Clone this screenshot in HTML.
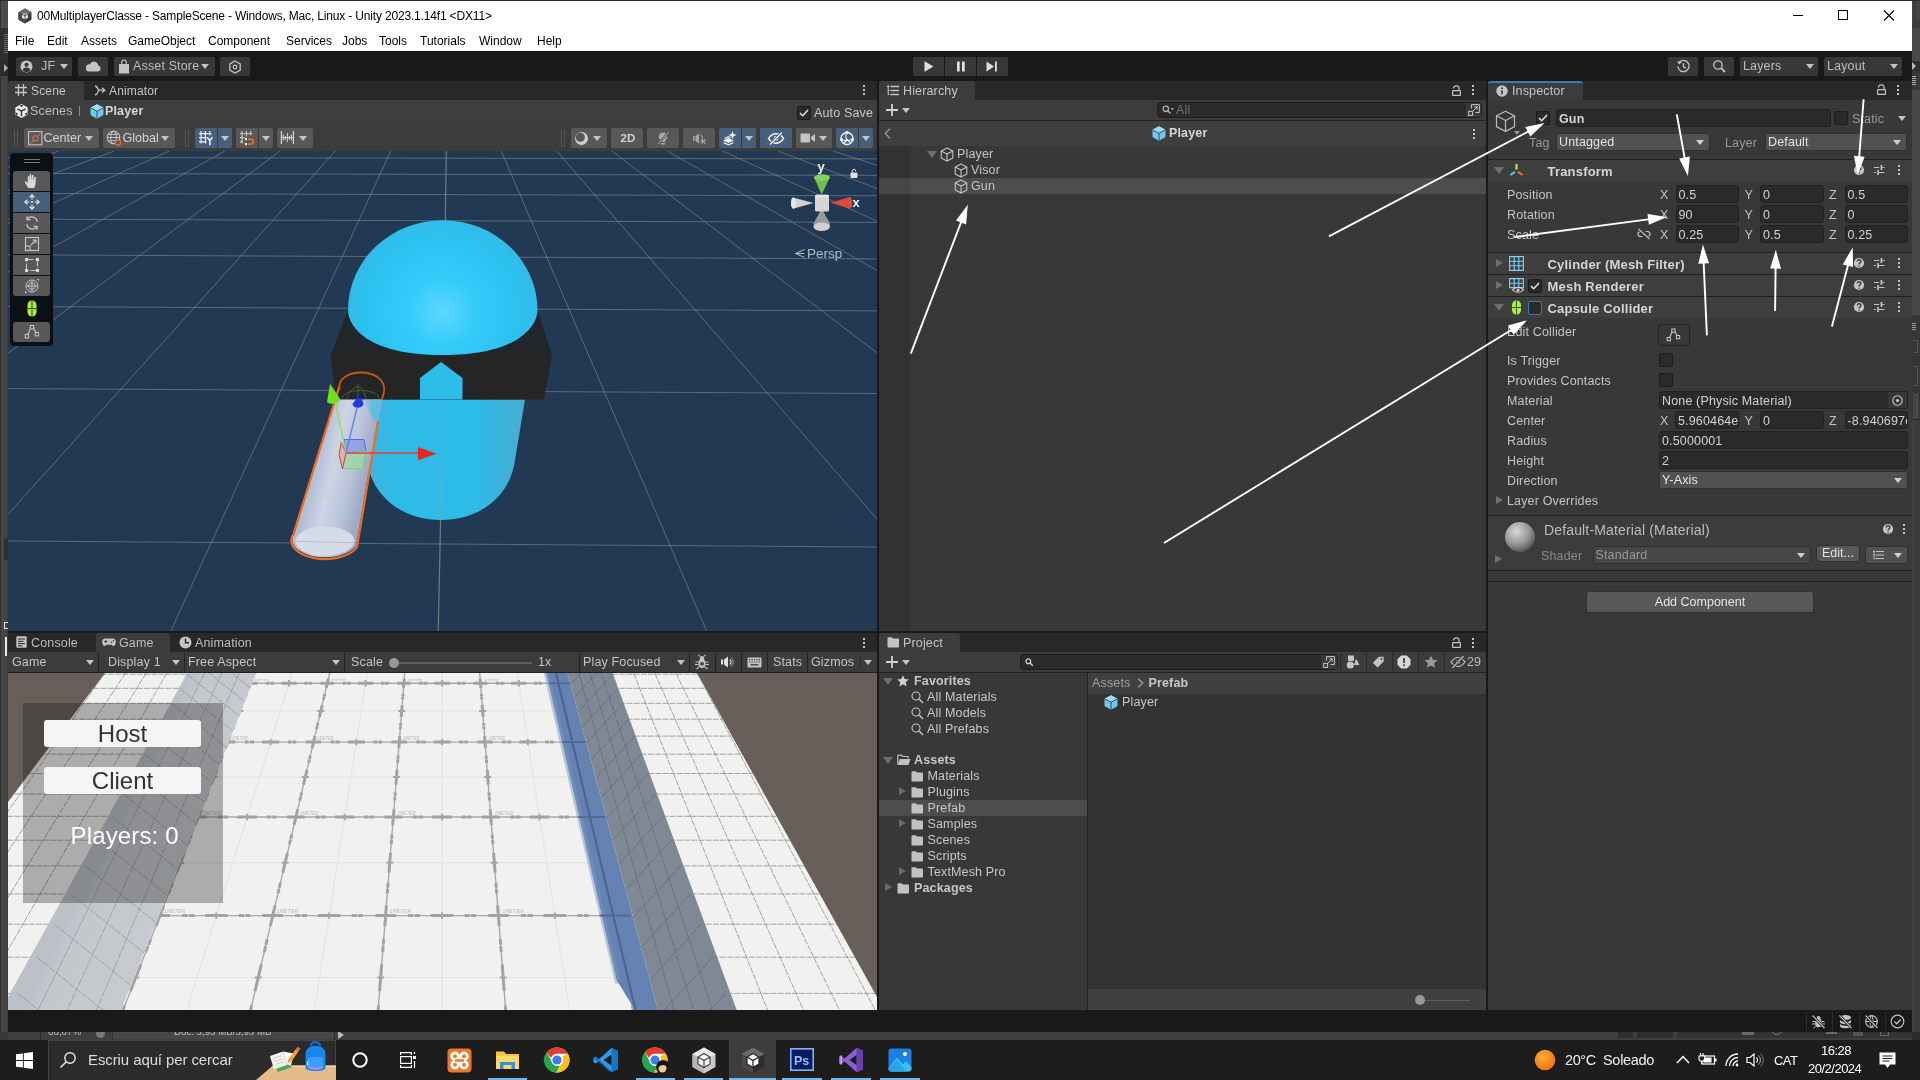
<!DOCTYPE html>
<html><head><meta charset="utf-8"><title>Unity</title>
<style>
*{box-sizing:border-box;margin:0;padding:0}
html,body{width:1920px;height:1080px;overflow:hidden;background:#4a4a4a;font-family:"Liberation Sans",sans-serif;font-size:12px;color:#c8c8c8}
.a{position:absolute}
.t{position:absolute;white-space:nowrap;line-height:1}
svg{position:absolute;overflow:visible}
.btn{position:absolute;background:#585858;border-radius:2px}
.fld{position:absolute;background:#2a2a2a;border:1px solid #212121;border-radius:3px;height:18px;line-height:16px;padding:1px 0 0 2px;color:#d2d2d2;white-space:nowrap;overflow:hidden}
.dd{position:absolute;background:#515151;border:1px solid #303030;border-radius:3px;height:18px;line-height:16px;padding:0 0 0 2px;color:#e4e4e4;white-space:nowrap}
.dd:after{content:"";position:absolute;right:5px;top:6px;border-left:4.5px solid transparent;border-right:4.5px solid transparent;border-top:5px solid #d2d2d2}
.tri-d{position:absolute;width:0;height:0;border-left:4.5px solid transparent;border-right:4.5px solid transparent;border-top:5px solid #c4c4c4}
.tri-r{position:absolute;width:0;height:0;border-top:4.5px solid transparent;border-bottom:4.5px solid transparent;border-left:7px solid #8a8a8a}
.fold-d{position:absolute;width:0;height:0;border-left:5px solid transparent;border-right:5px solid transparent;border-top:7px solid #707070}
.kebab{position:absolute;width:2px;height:2px;background:#c4c4c4;box-shadow:0 4px 0 #c4c4c4,0 8px 0 #c4c4c4}
.lbl{position:absolute;white-space:nowrap;line-height:1;color:#c4c4c4;margin-top:.5px}
.b{font-weight:bold}
.t,.lbl,.fld,.dd{letter-spacing:.15px}
#menu .t{letter-spacing:0}
.hl{position:absolute;height:1px;background:#1a1a1a}
.vl{position:absolute;width:1px;background:#1a1a1a}
.cb{position:absolute;width:14px;height:14px;background:#2a2a2a;border:1px solid #1c1c1c;border-radius:2px}
</style></head><body>
<div id="wrap" style="position:absolute;left:0;top:0;width:1920px;height:1080px;will-change:transform">
<!-- background window strips (left/right/bottom) -->
<div class="a" style="left:0;top:0;width:1920px;height:1px;background:#2b2b2b"></div>
<div class="a" style="left:0;top:1px;width:8px;height:1039px;background:#454545"></div>
<div class="a" style="left:0;top:1px;width:1px;height:1039px;background:#303030"></div>
<div class="a" style="left:7px;top:76px;width:1px;height:964px;background:#3a3a3a"></div>
<div class="a" style="left:1px;top:1px;width:7px;height:27px;background:#4b4b4b"></div>
<div class="a" style="left:1px;top:28px;width:7px;height:33px;background:#303030"></div>
<div class="a" style="left:4px;top:33px;width:4px;height:21px;background:repeating-linear-gradient(#303030 0 1px,#6a6a6a 1px 2px)"></div>
<div class="a" style="left:1px;top:61px;width:7px;height:15px;background:#2a2a2a"></div>
<div class="a" style="left:4px;top:64px;width:0;height:0;border-top:4px solid transparent;border-bottom:4px solid transparent;border-left:4px solid #b0b0b0"></div>
<div class="a" style="left:4px;top:538px;width:4px;height:22px;background:#2e2e2e;border-radius:2px 0 0 2px"></div>
<div class="a" style="left:4px;top:622px;width:4px;height:7px;border:1px solid #ddd;border-right:none"></div>
<div class="a" style="left:5px;top:637px;width:2px;height:19px;background:#e8e8e8"></div>
<div class="a" style="left:1912px;top:1px;width:8px;height:1039px;background:#3c3c3c"></div>
<div class="a" style="left:1912px;top:1px;width:1px;height:1039px;background:#424242"></div>
<div class="a" style="left:1916px;top:1px;width:4px;height:17px;background:#444"></div>
<div class="a" style="left:1912px;top:28px;width:8px;height:33px;background:#494949"></div>
<div class="a" style="left:1912px;top:61px;width:8px;height:10px;background:#303030"></div>
<div class="a" style="left:1912px;top:62px;width:0;height:0;border-top:4px solid transparent;border-bottom:4px solid transparent;border-left:4px solid #b8b8b8"></div>
<div class="a" style="left:1912px;top:71px;width:8px;height:19px;background:#383838"></div>
<div class="a" style="left:1912px;top:76px;width:4px;height:9px;background:repeating-linear-gradient(#aaa 0 1px,#383838 1px 2px)"></div>
<div class="a" style="left:1912px;top:90px;width:8px;height:225px;background:#474747"></div>
<div class="a" style="left:1912px;top:315px;width:8px;height:106px;background:#363636"></div>
<div class="a" style="left:1912px;top:323px;width:4px;height:7px;background:repeating-linear-gradient(#999 0 1px,#363636 1px 2px)"></div>
<div class="a" style="left:1913px;top:340px;width:5px;height:13px;border:1px solid #555;border-left:none"></div>
<div class="a" style="left:1913px;top:366px;width:5px;height:20px;border:1px solid #555;border-left:none"></div>
<div class="a" style="left:1913px;top:394px;width:5px;height:24px;border:1px solid #555;border-left:none;background:#444"></div>
<!-- Unity window -->
<div class="a" id="win" style="left:8px;top:1px;width:1904px;height:1031px;background:#191919"></div>
<!-- title bar -->
<div class="a" style="left:8px;top:1px;width:1904px;height:50px;background:#fff"></div>
<svg style="left:17px;top:8px" width="16" height="16" viewBox="0 0 16 16"><path d="M8 .5 14.5 4.2v7.6L8 15.5 1.500 11.800V4.200z" fill="#3a3a3a"/><path d="M8 .5 14.5 4.2 8 8 1.500 4.200z" fill="#6a6a6a"/><path d="M8 8v7.500L1.500 11.800V4.200z" fill="#4a4a4a"/><path d="M8 4.500l3 1.700v3.500l-3 1.800-3-1.800V6.200z" fill="#e6e6e6"/><path d="M8 4.500v7M5 6.200l3 1.800 3-1.800" stroke="#333" stroke-width=".8" fill="none"/></svg>
<div class="t" style="left:37px;top:10px;font-size:12px;color:#000;letter-spacing:-0.17px" id="title">00MultiplayerClasse - SampleScene - Windows, Mac, Linux - Unity 2023.1.14f1 &lt;DX11&gt;</div>
<svg style="left:1780px;top:1px" width="132" height="30" viewBox="0 0 132 30"><path d="M13 14.500h10" stroke="#000" stroke-width="1"/><rect x="58.500" y="9.500" width="9" height="9" fill="none" stroke="#000"/><path d="M104 9.500l10 10M114 9.500l-10 10" stroke="#000" stroke-width="1.100"/></svg>
<div id="menu" style="color:#000;font-size:12px">
<div class="t" style="left:15px;top:35px">File</div>
<div class="t" style="left:47px;top:35px">Edit</div>
<div class="t" style="left:81px;top:35px">Assets</div>
<div class="t" style="left:128px;top:35px">GameObject</div>
<div class="t" style="left:208px;top:35px">Component</div>
<div class="t" style="left:286px;top:35px">Services</div>
<div class="t" style="left:342px;top:35px">Jobs</div>
<div class="t" style="left:379px;top:35px">Tools</div>
<div class="t" style="left:420px;top:35px">Tutorials</div>
<div class="t" style="left:479px;top:35px">Window</div>
<div class="t" style="left:537px;top:35px">Help</div>
</div>
<!-- main toolbar y 51..81 bg #191919 -->
<div class="a" style="left:16px;top:57px;width:56px;height:19px;background:#383838;border-radius:2px"></div>
<div class="a" style="left:78px;top:57px;width:30px;height:19px;background:#383838;border-radius:2px"></div>
<div class="a" style="left:114px;top:57px;width:101px;height:19px;background:#383838;border-radius:2px"></div>
<div class="a" style="left:220px;top:57px;width:30px;height:19px;background:#383838;border-radius:2px"></div>
<svg style="left:20px;top:60px" width="13" height="13" viewBox="0 0 13 13"><circle cx="6.500" cy="6.500" r="6" fill="#c4c4c4"/><circle cx="6.500" cy="4.800" r="2.100" fill="#383838"/><path d="M2.600 10.200c.8-2 2.300-2.600 3.900-2.600s3.100.6 3.900 2.600c-1 1.300-2.400 1.900-3.900 1.900s-2.900-.6-3.900-1.900z" fill="#383838"/></svg>
<div class="t" style="left:41px;top:60px;font-size:12.500px;color:#bdbdbd">JF</div>
<div class="tri-d" style="left:60px;top:64px"></div>
<svg style="left:85px;top:60px" width="16" height="12" viewBox="0 0 16 12"><path d="M4 11.500h8.500a3 3 0 0 0 .6-5.950A4.200 4.200 0 0 0 5 4.300 3.600 3.600 0 0 0 4 11.500z" fill="#c4c4c4"/></svg>
<svg style="left:118px;top:59px" width="12" height="15" viewBox="0 0 12 15"><path d="M1 5h10v9.500H1z" fill="#c4c4c4"/><path d="M3.800 5V3.200a2.200 2.200 0 0 1 4.400 0V5" fill="none" stroke="#c4c4c4" stroke-width="1.200"/></svg>
<div class="t" style="left:133px;top:60px;font-size:12.500px;color:#bdbdbd">Asset Store</div>
<div class="tri-d" style="left:201px;top:64px"></div>
<svg style="left:228px;top:60px" width="14" height="14" viewBox="0 0 14 14"><path d="M7 1 12.200 4v6L7 13 1.800 10V4z" fill="none" stroke="#c4c4c4" stroke-width="1.300"/><circle cx="7" cy="7" r="1.800" fill="none" stroke="#c4c4c4" stroke-width="1.200"/></svg>
<!-- play controls -->
<div class="a" style="left:913px;top:57px;width:31px;height:19px;background:#383838;border-radius:2px 0 0 2px"></div>
<div class="a" style="left:945px;top:57px;width:31px;height:19px;background:#383838"></div>
<div class="a" style="left:977px;top:57px;width:31px;height:19px;background:#383838;border-radius:0 2px 2px 0"></div>
<svg style="left:913px;top:57px" width="95" height="19" viewBox="0 0 95 19"><path d="M11.500 4.300v10.400l9-5.200z" fill="#e0e0e0"/><path d="M44 4.500h2.700v10H44zM49 4.500h2.700v10H49z" fill="#e0e0e0"/><path d="M73.500 4.500v10l7.500-5zM82 4.500h1.800v10H82z" fill="#e0e0e0"/></svg>
<!-- right group -->
<div class="a" style="left:1668px;top:57px;width:30px;height:19px;background:#383838;border-radius:2px"></div>
<div class="a" style="left:1704px;top:57px;width:30px;height:19px;background:#383838;border-radius:2px"></div>
<div class="a" style="left:1740px;top:57px;width:78px;height:19px;background:#383838;border-radius:2px"></div>
<div class="a" style="left:1824px;top:57px;width:78px;height:19px;background:#383838;border-radius:2px"></div>
<svg style="left:1676px;top:59px" width="15" height="15" viewBox="0 0 15 15"><path d="M2.600 4.200A5.600 5.600 0 1 1 1.900 7.500" fill="none" stroke="#c4c4c4" stroke-width="1.400"/><path d="M.8 2.200 3.300 5.600 5.800 2.900z" fill="#c4c4c4"/><path d="M7.500 4.300v3.500l2.500 1.400" fill="none" stroke="#c4c4c4" stroke-width="1.300"/></svg>
<svg style="left:1712px;top:59px" width="15" height="15" viewBox="0 0 15 15"><circle cx="6" cy="6" r="4.200" fill="none" stroke="#c4c4c4" stroke-width="1.300"/><path d="M9.200 9.200 13 13" stroke="#c4c4c4" stroke-width="1.800"/></svg>
<div class="t" style="left:1743px;top:60px;font-size:12.500px;color:#bdbdbd">Layers</div>
<div class="tri-d" style="left:1806px;top:64px"></div>
<div class="t" style="left:1827px;top:60px;font-size:12.500px;color:#bdbdbd">Layout</div>
<div class="tri-d" style="left:1890px;top:64px"></div>
<!-- ============ SCENE PANEL (x 8..877, y 81..630) ============ -->
<div class="a" style="left:8px;top:81px;width:869px;height:19px;background:#282828"></div>
<div class="a" style="left:8px;top:81px;width:76px;height:19px;background:#3c3c3c;border-radius:3px 3px 0 0"></div>
<div class="a" style="left:8px;top:100px;width:869px;height:51px;background:#3c3c3c"></div>
<div class="a" style="left:8px;top:100px;width:869px;height:24px;background:#3e3e3e"></div>
<svg style="left:15px;top:84px" width="12" height="12" viewBox="0 0 12 12"><path d="M3.500 0v12M8.500 0v12M0 3.500h12M0 8.500h12" stroke="#c4c4c4" stroke-width="1.300"/></svg>
<div class="t" style="left:31px;top:85px;color:#c4c4c4">Scene</div>
<svg style="left:94px;top:85px" width="12" height="11" viewBox="0 0 12 11"><path d="M1 1c2 .5 3 2 3.500 4.200H10M1 10c2-.5 3-2 3.500-4.800" fill="none" stroke="#c4c4c4" stroke-width="1.300"/><path d="M8 2.800 10.800 5.200 8 7.600" fill="none" stroke="#c4c4c4" stroke-width="1.300"/></svg>
<div class="t" style="left:109px;top:85px;color:#c4c4c4">Animator</div>
<div class="kebab" style="left:863px;top:85px"></div>
<!-- breadcrumb -->
<svg style="left:15px;top:104px" width="13" height="14" viewBox="0 0 13 14"><path d="M6.500 0 12.700 3.500v7L6.500 14 .3 10.500v-7z" fill="#ececec"/><path d="M6.500 7.200V12.300M6.500 7.200 2.300 4.800M6.500 7.200l4.200-2.400" stroke="#3e3e3e" stroke-width="1.500" fill="none"/><path d="M4.700.900 6.500 3.600 8.300.900zM0 8.200l3 1-1.100 2.500zM13 8.200l-3 1 1.100 2.500z" fill="#3e3e3e"/></svg>
<div class="t" style="left:30px;top:105px;font-size:12.500px;color:#bdbdbd">Scenes</div>
<div class="a" style="left:79px;top:106px;width:1px;height:10px;background:#8a8a8a"></div>
<svg style="left:90px;top:104px" width="14" height="15" viewBox="0 0 14 15"><path d="M7 .3 13.500 3.800v7.300L7 14.700.5 11.100V3.800z" fill="#6fc8f0"/><path d="M7 .3 13.500 3.800 7 7.300.5 3.800z" fill="#9adcf7"/><path d="M7 7.300v7.400M.5 3.800 7 7.300l6.500-3.500" stroke="#3e3e3e" stroke-width=".9" fill="none"/></svg>
<div class="t b" style="left:105px;top:105px;font-size:12.500px;color:#d6d6d6">Player</div>
<div class="cb" style="left:797px;top:106px"></div>
<svg style="left:799px;top:109px" width="10" height="8" viewBox="0 0 10 8"><path d="M1 4l2.700 2.700L9 1" fill="none" stroke="#e4e4e4" stroke-width="1.500"/></svg>
<div class="t" style="left:814px;top:107px;font-size:12.500px;color:#c8c8c8">Auto Save</div>
<!-- overlay toolbar left -->
<div class="a" style="left:14px;top:130px;width:1px;height:17px;background:#555"></div><div class="a" style="left:17px;top:130px;width:1px;height:17px;background:#555"></div>
<div class="btn" style="left:24px;top:128px;width:75px;height:20px"></div>
<svg style="left:28px;top:131px" width="15" height="15" viewBox="0 0 15 15"><rect x=".6" y=".6" width="13.300" height="13.300" fill="none" stroke="#d0d0d0" stroke-width="1"/><path d="M2.500 12.500 12.500 2.500" stroke="#aaa" stroke-width=".8"/><circle cx="7.500" cy="7.300" r="2.600" fill="#585858" stroke="#f06a35" stroke-width="1.100"/></svg>
<div class="t" style="left:43.500px;top:131.500px;font-size:12.600px;letter-spacing:0;color:#d2d2d2">Center</div>
<div class="tri-d" style="left:85px;top:136px"></div>
<div class="btn" style="left:103px;top:128px;width:72px;height:20px"></div>
<svg style="left:106px;top:130px" width="17" height="17" viewBox="0 0 17 17"><circle cx="7.500" cy="7.500" r="6.300" fill="none" stroke="#d0d0d0" stroke-width="1"/><ellipse cx="7.500" cy="7.500" rx="2.800" ry="6.300" fill="none" stroke="#d0d0d0" stroke-width=".9"/><path d="M1.200 7.500h12.600M2.200 4.300h10.600M2.200 10.700h10.600" stroke="#d0d0d0" stroke-width=".9"/><circle cx="12" cy="12.500" r="2.600" fill="#585858" stroke="#f06a35" stroke-width="1.300"/></svg>
<div class="t" style="left:122.500px;top:131.500px;font-size:12.600px;letter-spacing:0;color:#d2d2d2">Global</div>
<div class="tri-d" style="left:161px;top:136px"></div>
<div class="a" style="left:185px;top:130px;width:1px;height:17px;background:#555"></div><div class="a" style="left:188px;top:130px;width:1px;height:17px;background:#555"></div>
<div class="btn" style="left:195px;top:128px;width:22px;height:20px;background:#46607c;border-radius:2px 0 0 2px"></div>
<div class="btn" style="left:218px;top:128px;width:14px;height:20px;background:#46607c;border-radius:0 2px 2px 0"></div>
<svg style="left:199px;top:131px" width="15" height="15" viewBox="0 0 15 15"><path d="M2.100 0V12.500M6.400 0V12.500M10.700 0V4.600M0 2.700H12.600M0 6.600H7.500M0 10.900H7.500" stroke="#f0f0f0" stroke-width="1.200" fill="none"/><path d="M8.200 6.200 10.800 9.800 13.400 6.200M10.800 9.800V14.200" stroke="#f4f4f4" stroke-width="1.500" fill="none"/></svg>
<div class="tri-d" style="left:220.500px;top:136px"></div>
<div class="btn" style="left:236px;top:128px;width:22px;height:20px;border-radius:2px 0 0 2px"></div>
<div class="btn" style="left:259px;top:128px;width:14px;height:20px;border-radius:0 2px 2px 0"></div>
<svg style="left:240px;top:131px" width="15" height="15" viewBox="0 0 15 15"><path d="M2.100 0V12.500M6.400 0V5.500M10.700 0V4.600M0 2.700H12.300M0 6.600H4.800M0 10.900H3.700" stroke="#d4d4d4" stroke-width="1.100" stroke-dasharray="3 .5" fill="none"/><rect x="5" y="7" width="2" height="2.200" fill="#f4f4f4"/><rect x="5" y="12" width="2" height="2.200" fill="#f4f4f4"/><path d="M8 8.200h2.800a2.500 2.500 0 0 1 0 5H8" stroke="#f4652f" stroke-width="1.700" fill="none"/></svg>
<div class="tri-d" style="left:261.500px;top:136px"></div>
<div class="btn" style="left:277px;top:128px;width:36px;height:20px"></div>
<svg style="left:280px;top:131px" width="15" height="15" viewBox="0 0 15 15"><path d="M1.400 0V13M13.400 0V13" stroke="#d4d4d4" stroke-width="1.200"/><path d="M3.300 3.500V9.500M5.300 5V9M7.400 2V11M9.400 5V9M11.400 3.500V9.500M1.400 6.600H13.400" stroke="#d4d4d4" stroke-width="1"/></svg>
<div class="tri-d" style="left:298.500px;top:136px"></div>
<!-- overlay toolbar right -->
<div class="a" style="left:561px;top:130px;width:1px;height:17px;background:#555"></div><div class="a" style="left:564px;top:130px;width:1px;height:17px;background:#555"></div>
<div class="btn" style="left:571px;top:128px;width:36px;height:20px"></div>
<svg style="left:574px;top:131px" width="15" height="15" viewBox="0 0 15 15"><circle cx="7.500" cy="7.500" r="6.500" fill="#d0d0d0"/><circle cx="6.300" cy="6.300" r="4.600" fill="#585858"/></svg>
<div class="tri-d" style="left:592.500px;top:136px"></div>
<div class="btn" style="left:611px;top:128px;width:32px;height:20px"></div>
<div class="t b" style="left:620.500px;top:132.500px;font-size:11.500px;color:#cfcfcf">2D</div>
<div class="btn" style="left:647px;top:128px;width:32px;height:20px"></div>
<svg style="left:656px;top:131px" width="14" height="15" viewBox="0 0 14 15"><path d="M7 1.500a4.200 4.200 0 0 1 2.400 7.700v1.800H4.600V9.200A4.200 4.200 0 0 1 7 1.500zM5 12h4v1.500H5z" fill="#a8a8a8"/><path d="M2 13 12.500 1.500" stroke="#585858" stroke-width="2.200"/><path d="M2 13 12.500 1.500" stroke="#a8a8a8" stroke-width="1"/></svg>
<div class="btn" style="left:683px;top:128px;width:32px;height:20px"></div>
<svg style="left:692px;top:132px" width="16" height="13" viewBox="0 0 16 13"><path d="M1 4h1.500v5H1zM3.500 4 7 1.500v10L3.500 9z" fill="#a8a8a8"/><path d="M8.500 3a4 4 0 0 1 0 7" stroke="#a8a8a8" fill="none" stroke-width="1.100"/><path d="M9.500 7.500l4 4M13.500 7.500l-4 4" stroke="#a8a8a8" stroke-width="1.100"/></svg>
<div class="btn" style="left:719px;top:128px;width:22px;height:20px;background:#46607c;border-radius:2px 0 0 2px"></div>
<div class="btn" style="left:742px;top:128px;width:14px;height:20px;background:#46607c;border-radius:0 2px 2px 0"></div>
<svg style="left:722px;top:131px" width="16" height="15" viewBox="0 0 16 15"><path d="M1 9.500 6.500 7l5.500 2.500L6.500 12zM1 12l5.500 2.500L12 12l-1.500-.7-4 1.900-4-1.900z" fill="#f0f0f0"/><path d="M10.500 0l1.100 3 3 1.100-3 1.100-1.100 3-1.100-3-3-1.100 3-1.100z" fill="#f0f0f0"/><path d="M2.500 7.500 6.500 5.700l2 .9" stroke="#f0f0f0" stroke-width="1.200" fill="none"/></svg>
<div class="tri-d" style="left:744.500px;top:136px"></div>
<div class="btn" style="left:760px;top:128px;width:32px;height:20px;background:#46607c"></div>
<svg style="left:767px;top:131px" width="18" height="15" viewBox="0 0 18 15"><path d="M1.500 7.500C4 3.800 6.500 2.800 9 2.800s5 1 7.500 4.700C14 11.200 11.500 12.200 9 12.200s-5-1-7.500-4.700z" fill="none" stroke="#f0f0f0" stroke-width="1.500"/><circle cx="9" cy="7.500" r="2.400" fill="#f0f0f0"/><path d="M3 13.500 15 1.500" stroke="#46607c" stroke-width="3"/><path d="M3 13.500 15 1.500" stroke="#f0f0f0" stroke-width="1.300"/></svg>
<div class="btn" style="left:796px;top:128px;width:36px;height:20px"></div>
<svg style="left:800px;top:132px" width="16" height="12" viewBox="0 0 16 12"><rect x=".5" y="1.500" width="9.500" height="9" rx="1" fill="#c4c4c4"/><path d="M11 5 15 2v8l-4-3z" fill="#c4c4c4"/></svg>
<div class="tri-d" style="left:818.500px;top:136px"></div>
<div class="btn" style="left:836px;top:128px;width:22px;height:20px;background:#46607c;border-radius:2px 0 0 2px"></div>
<div class="btn" style="left:859px;top:128px;width:14px;height:20px;background:#46607c;border-radius:0 2px 2px 0"></div>
<svg style="left:839px;top:130px" width="16" height="16" viewBox="0 0 16 16"><circle cx="8" cy="8.500" r="6" fill="none" stroke="#f0f0f0" stroke-width="1.400"/><path d="M8 2.500c-1.500 2-1.500 5 0 7.500M2.200 9.500c2.500 1.200 6 1.500 11.500 0M8 10l-3.500 3.500M8 10l4 3" stroke="#f0f0f0" stroke-width="1.100" fill="none"/><circle cx="8" cy="2.500" r="1.700" fill="#f0f0f0"/><circle cx="2.500" cy="9.500" r="1.500" fill="#f0f0f0"/><circle cx="13.500" cy="9.500" r="1.500" fill="#f0f0f0"/><circle cx="8" cy="10" r="1.300" fill="#f0f0f0"/></svg>
<div class="tri-d" style="left:861.500px;top:136px"></div>
<!-- scene viewport -->
<div class="a" style="left:8px;top:151px;width:869px;height:480px;background:#223954;overflow:hidden">
<svg style="left:0;top:0" width="869" height="480" viewBox="8 151 869 480">
<path d="M8 157.5L877 158.9M8 173.4L877 175.3M8 193.4L877 195.8M8 219.1L877 222.4M8 254.8L877 258.9M8 306.5L877 310.9M8 388.6L877 393.5M8 541L877 547M-51.7 151L-1972.7 631M3.6 151L-1704.8 631M58.9 151L-1436.8 631M114.2 151L-1168.9 631M169.5 151L-900.9 631M224.8 151L-633.0 631M280.1 151L-365.1 631M335.4 151L-97.1 631M390.7 151L170.8 631M501.3 151L706.7 631M556.6 151L974.6 631M611.9 151L1242.6 631M667.2 151L1510.5 631M722.5 151L1778.5 631M777.8 151L2046.4 631M833.1 151L2314.3 631M888.4 151L2582.3 631M943.7 151L2850.2 631" stroke="#84878c" stroke-opacity=".62" stroke-width="1" fill="none"/>
<path d="M-438.8 151L-3848.3 631M-383.5 151L-3580.3 631M-328.2 151L-3312.4 631M-272.9 151L-3044.5 631M-217.6 151L-2776.5 631M-162.3 151L-2508.6 631M-107.0 151L-2240.6 631M999.0 151L3118.2 631M1054.3 151L3386.1 631M1109.6 151L3654.0 631M1164.9 151L3922.0 631M1220.2 151L4189.9 631M1275.5 151L4457.9 631M1330.8 151L4725.8 631" stroke="#84878c" stroke-opacity=".45" stroke-width="1" fill="none"/>
<path d="M446.300 151L445.300 221M440.600 520L438.200 631" stroke="#84878b" stroke-opacity=".85" stroke-width="1.200" fill="none"/>
<defs>
<radialGradient id="gh" cx="442" cy="312" r="100" gradientUnits="userSpaceOnUse"><stop offset="0" stop-color="#5bd8ff"/><stop offset=".35" stop-color="#34cbfa"/><stop offset=".8" stop-color="#2cc0ef"/><stop offset="1" stop-color="#36b9e6"/></radialGradient>
<linearGradient id="gb" x1="357" y1="0" x2="525" y2="0" gradientUnits="userSpaceOnUse"><stop offset="0" stop-color="#3fb4dc"/><stop offset=".25" stop-color="#2fbbe8"/><stop offset=".7" stop-color="#2dbbe8"/><stop offset="1" stop-color="#48acd2"/></linearGradient>
<linearGradient id="gg" x1="316" y1="459" x2="368" y2="471" gradientUnits="userSpaceOnUse"><stop offset="0" stop-color="#b2bcd4"/><stop offset=".35" stop-color="#ced5e8"/><stop offset=".7" stop-color="#bac3da"/><stop offset="1" stop-color="#9da9c5"/></linearGradient><linearGradient id="gw" x1="364" y1="0" x2="381" y2="0" gradientUnits="userSpaceOnUse"><stop offset="0" stop-color="#4dbde6" stop-opacity=".25"/><stop offset=".6" stop-color="#4dbde6" stop-opacity=".8"/><stop offset="1" stop-color="#5cc0e4" stop-opacity=".9"/></linearGradient>
</defs>
<path d="M357 399.500H525L515 460C510 498 478 520 441 520S372 498 367 460z" fill="url(#gb)"/>
<path d="M348 310H537.500L552 355.500H330.500z" fill="#22262b"/>
<path d="M330.500 355.500H552L543.800 399.500H336z" fill="#252525"/>
<path d="M420 399.500V378L441 362L462.500 378V399.500z" fill="#2dbde9"/>
<path d="M348 310A94.500 89.500 0 0 1 537.500 310C537.500 325 520 355 442.500 355S348 325 348 310z" fill="url(#gh)"/>
<path d="M334.700 399.500L294.500 534A30.500 16 0 0 0 356 546L377.500 420L381.500 399.500z" fill="url(#gg)"/>
<ellipse cx="325" cy="541" rx="29.500" ry="14.500" fill="#d6dbe8"/>
<path d="M363.500 399.500H382L377.800 422L372.500 418z" fill="url(#gw)"/>
<path d="M296 541.300L355 542.800" stroke="#9aa0aa" stroke-opacity=".5" stroke-width="1" fill="none"/>
<path d="M339.500 386L293.500 534A31 17 0 0 0 357 547L378 421" fill="none" stroke="#f26a1b" stroke-width="2.200" stroke-linejoin="round"/>
<path d="M378 421L382 399.500" fill="none" stroke="#9aa6c0" stroke-opacity=".7" stroke-width="1.200"/>
<path d="M382 399.500L384 392C386 378 372 372.500 361 372.500S337 378 339.500 390" fill="none" stroke="#c4571c" stroke-width="1.800"/>
<path d="M342 398C345 388 376 388 379 398M346 399C352 386 362 380 366 399M358 399V384" fill="none" stroke="#4f6b47" stroke-width=".8"/>
<path d="M344 439.500H364L366 451L346 453z" fill="#8a96e6" fill-opacity=".75" stroke="#4f6cf0" stroke-width="1"/>
<path d="M346 453L366 451L362.500 468.800H342.500z" fill="#9fd6a4" fill-opacity=".8" stroke="#69e04a" stroke-width="1"/>
<path d="M341.300 442.500L346 453L342.500 468.800L339 455z" fill="#e5a7ad" fill-opacity=".8" stroke="#d2433a" stroke-width="1"/>
<path d="M346 453H420" stroke="#d8423a" stroke-width="1.600"/>
<path d="M418 447L436.500 453.800L418 460.200z" fill="#e02a20"/>
<path d="M346 453L334.500 398" stroke="#8be552" stroke-width="1.300"/>
<path d="M330 384L327 402C329 405 338 404 340.500 399.500z" fill="#6ee01e"/>
<path d="M346 453L357 408" stroke="#5a7cf5" stroke-width="1.300"/>
<path d="M360.500 393L352.500 404C353 409 362 409 363.500 404z" fill="#1d3fd8"/><path d="M360.500 393L358 398H363z" fill="#0b1a7a"/>
<path d="M441.200 453L440.600 520" stroke="#9aa0a6" stroke-opacity=".55" stroke-width="1" fill="none"/>
<path d="M309 499C318 495 350 497 357 507M326 498L348 409" stroke="#a8e08a" stroke-opacity=".45" stroke-width=".7" fill="none"/>
</svg>
<svg style="left:0;top:0" width="869" height="480" viewBox="8 151 869 480">
<path d="M793 197.500C790.500 199 790.500 207.500 793 208.800L813.500 203z" fill="#d2d2d2"/><ellipse cx="793.500" cy="203.100" rx="2.500" ry="5.600" fill="#e6e6e6"/>
<path d="M850 197C853 199 853 207.500 850 208.800L830.500 202.800z" fill="#e0493d"/>
<path d="M813.500 223.500C813.500 232 830 232 830 223.500L822.500 210h-1.500z" fill="#9b9b9b"/><ellipse cx="821.700" cy="226.800" rx="8.300" ry="4.200" fill="#d0d0d0"/>
<path d="M814 177.500L821.700 194.500L829.800 177.500z" fill="#6fc04a"/><ellipse cx="821.900" cy="177.600" rx="7.900" ry="3.300" fill="#85d35c"/>
<rect x="815" y="194.800" width="14" height="16.600" rx="1.500" fill="#d6d6d6"/><rect x="815" y="194.800" width="14" height="3" rx="1.500" fill="#e4e4e4"/>
<text x="817.500" y="171" font-family="Liberation Sans" font-weight="bold" font-size="13" fill="#f0f0f0">y</text>
<text x="852.500" y="206.500" font-family="Liberation Sans" font-weight="bold" font-size="13" fill="#f0f0f0">x</text>
<path d="M851 173h6v4.500h-6zM852.200 173v-1.800a1.800 1.800 0 0 1 3.600 0" fill="none" stroke="#e0e0e0" stroke-width="1"/><rect x="851" y="173" width="6" height="4.500" fill="#e0e0e0"/>
<path d="M804.500 249.500L795.500 253.500L804.500 257.500M795.500 253.500H804" fill="none" stroke="#b4bcc6" stroke-width="1"/>
<text x="807" y="258.200" font-family="Liberation Sans" font-size="13.500" fill="#b4bcc6">Persp</text>
</svg>
<div class="a" style="left:2px;top:2px;width:43px;height:193px;background:#0b1016;border-radius:4px"></div>
<div class="a" style="left:16px;top:8px;width:16px;height:1px;background:#777"></div><div class="a" style="left:16px;top:11px;width:16px;height:1px;background:#777"></div>
<div class="a" style="left:5px;top:20px;width:37px;height:20px;background:#585858;border-radius:3px 3px 0 0"></div>
<div class="a" style="left:5px;top:41px;width:37px;height:20px;background:#46607c;border-radius:0"></div>
<div class="a" style="left:5px;top:62px;width:37px;height:20px;background:#585858;border-radius:0"></div>
<div class="a" style="left:5px;top:83px;width:37px;height:20px;background:#585858;border-radius:0"></div>
<div class="a" style="left:5px;top:104px;width:37px;height:20px;background:#585858;border-radius:0"></div>
<div class="a" style="left:5px;top:125px;width:37px;height:20px;background:#585858;border-radius:0 0 3px 3px"></div>
<div class="a" style="left:5px;top:171px;width:37px;height:20px;background:#585858;border-radius:3px"></div>
<svg style="left:15.500px;top:22px" width="16" height="16" viewBox="0 0 16 16"><path d="M4.500 15c-1.200-1.500-2.500-3.500-3.500-5.500-.5-1 .8-1.700 1.500-.8l1.300 1.600V3.500c0-1 1.500-1 1.600 0l.3 4V1.800c0-1 1.600-1 1.600 0l.2 5.700.5-5c.1-1 1.600-.9 1.600.1l-.2 5.400 1-3.800c.3-.9 1.600-.6 1.500.4L11.500 11c-.2 1.500-.8 3-1.500 4z" fill="#d8d8d8"/></svg>
<svg style="left:15.500px;top:43px" width="16" height="16" viewBox="0 0 16 16"><path d="M8 1.500v13M1.500 8h13" stroke="#e8e8e8" stroke-width="1.100" stroke-dasharray="4 1.500 2 1.500 4"/><path d="M5.800 3.500 8 .8l2.200 2.700M5.800 12.500 8 15.200l2.200-2.700M3.500 5.800.8 8l2.700 2.200M12.500 5.800 15.200 8l-2.700 2.200" fill="none" stroke="#e8e8e8" stroke-width="1.200"/></svg>
<svg style="left:15.500px;top:64px" width="16" height="16" viewBox="0 0 16 16"><path d="M13.300 6.800A5.600 5.600 0 0 0 3.300 4.200M2.700 9.200A5.600 5.600 0 0 0 12.700 11.800" fill="none" stroke="#c8c8c8" stroke-width="1.200"/><path d="M3 1.200V4.600H6.400M13 14.800V11.400H9.600" fill="none" stroke="#c8c8c8" stroke-width="1.200"/></svg>
<svg style="left:15.500px;top:85px" width="16" height="16" viewBox="0 0 16 16"><rect x="1.500" y="1.500" width="13" height="13" fill="none" stroke="#c8c8c8" stroke-width="1.100"/><rect x="1.500" y="10" width="4.500" height="4.500" fill="none" stroke="#c8c8c8" stroke-width="1.100"/><path d="M7 9 12 4M8.500 4H12v3.500" fill="none" stroke="#c8c8c8" stroke-width="1.100"/></svg>
<svg style="left:15.500px;top:106px" width="16" height="16" viewBox="0 0 16 16"><path d="M2.500 2.500h11v11h-11z" fill="none" stroke="#c8c8c8" stroke-width="1.100" stroke-dasharray="7 2 2 0"/><rect x="1" y="1" width="3" height="3" fill="#d8d8d8"/><rect x="12" y="1" width="3" height="3" fill="#d8d8d8"/><rect x="1" y="12" width="3" height="3" fill="#d8d8d8"/><rect x="12" y="12" width="3" height="3" fill="#d8d8d8"/></svg>
<svg style="left:15.500px;top:127px" width="16" height="16" viewBox="0 0 16 16"><circle cx="8" cy="8" r="6" fill="none" stroke="#c8c8c8" stroke-width="1"/><circle cx="8" cy="8" r="3.500" fill="none" stroke="#c8c8c8" stroke-width=".9"/><path d="M8 2.500v11M2.500 8h11" stroke="#c8c8c8" stroke-width="1"/><path d="M1 13v2h2zM13 1h2v2z" fill="#d8d8d8"/></svg>
<svg style="left:19px;top:149px" width="10" height="17" viewBox="0 0 10 17"><rect x=".5" y=".5" width="9" height="16" rx="4.500" fill="#a6ee3c"/><path d="M5 .5v16M.5 8.500h9" stroke="#2c4a10" stroke-width="1"/></svg>
<svg style="left:15.500px;top:173px" width="16" height="16" viewBox="0 0 16 16"><path d="M3 12 7 3.500h2L13 10" fill="none" stroke="#c8c8c8" stroke-width="1.100"/><rect x="6.300" y="1.500" width="3.400" height="3.400" fill="#585858" stroke="#c8c8c8" stroke-width="1"/><rect x="1.200" y="10.500" width="3.400" height="3.400" fill="#585858" stroke="#c8c8c8" stroke-width="1"/><rect x="11.200" y="8.500" width="3.400" height="3.400" fill="#585858" stroke="#c8c8c8" stroke-width="1"/></svg>
</div>
<!-- ============ GAME PANEL ============ -->
<div class="a" style="left:8px;top:633px;width:869px;height:19px;background:#282828"></div>
<div class="a" style="left:96px;top:633px;width:74px;height:19px;background:#3c3c3c;border-radius:3px 3px 0 0"></div>
<div class="a" style="left:8px;top:652px;width:869px;height:20px;background:#3c3c3c"></div>
<div class="a" style="left:8px;top:672px;width:869px;height:1px;background:#1f1f1f"></div>
<svg style="left:16px;top:636px" width="11" height="12" viewBox="0 0 11 12"><rect x=".3" y=".3" width="10.400" height="11.400" rx="1" fill="#c4c4c4"/><path d="M2 3h7M2 5.300h5.500M2 7.600h7M2 9.800h4.500" stroke="#282828" stroke-width="1"/></svg>
<div class="t" style="left:31px;top:637px;font-size:12.500px;color:#bdbdbd">Console</div>
<svg style="left:102px;top:638px" width="14" height="9" viewBox="0 0 14 9"><path d="M3.500 .5h7A3.300 3.300 0 0 1 13.800 4C13.800 6 12.800 8 11.500 8c-1 0-1.500-1.300-2.500-1.300H5C4 6.700 3.500 8 2.500 8 1.200 8 .2 6 .2 4A3.300 3.300 0 0 1 3.500.5z" fill="#c4c4c4"/><path d="M3.800 2v3M2.300 3.500h3" stroke="#3c3c3c" stroke-width="1"/><circle cx="9.500" cy="4.300" r=".8" fill="#3c3c3c"/><circle cx="11.300" cy="2.700" r=".8" fill="#3c3c3c"/></svg>
<div class="t" style="left:119px;top:637px;font-size:12.500px;color:#bdbdbd">Game</div>
<svg style="left:179px;top:636px" width="13" height="13" viewBox="0 0 13 13"><circle cx="6.500" cy="6.500" r="6" fill="#c4c4c4"/><path d="M6.500 2.500v4.300h3.500" fill="none" stroke="#282828" stroke-width="1.400"/></svg>
<div class="t" style="left:195px;top:637px;font-size:12.500px;color:#bdbdbd">Animation</div>
<div class="kebab" style="left:863px;top:638px"></div>
<div class="t" style="left:12px;top:656px;font-size:12.500px;color:#c4c4c4">Game</div>
<div class="tri-d" style="left:85.5px;top:660px"></div>
<div class="a" style="left:98px;top:653px;width:1px;height:19px;background:#242424"></div>
<div class="t" style="left:108px;top:656px;font-size:12.500px;color:#c4c4c4">Display 1</div>
<div class="tri-d" style="left:172px;top:660px"></div>
<div class="a" style="left:184px;top:653px;width:1px;height:19px;background:#242424"></div>
<div class="t" style="left:188px;top:656px;font-size:12.500px;color:#c4c4c4">Free Aspect</div>
<div class="tri-d" style="left:332px;top:660px"></div>
<div class="a" style="left:344px;top:653px;width:1px;height:19px;background:#242424"></div>
<div class="t" style="left:351px;top:656px;font-size:12.500px;color:#c4c4c4">Scale</div>
<div class="a" style="left:394px;top:662px;width:138px;height:1.500px;background:#5e5e5e"></div>
<div class="a" style="left:389px;top:657.500px;width:10px;height:10px;border-radius:5px;background:#999"></div>
<div class="t" style="left:538px;top:656px;font-size:12.500px;color:#c4c4c4">1x</div>
<div class="a" style="left:579px;top:653px;width:1px;height:19px;background:#242424"></div>
<div class="t" style="left:583px;top:656px;font-size:12.500px;color:#c4c4c4">Play Focused</div>
<div class="tri-d" style="left:677px;top:660px"></div>
<div class="a" style="left:689px;top:653px;width:1px;height:19px;background:#242424"></div>
<svg style="left:694px;top:654px" width="16" height="16" viewBox="0 0 16 16"><ellipse cx="8" cy="9.500" rx="3.600" ry="4.500" fill="#c4c4c4"/><circle cx="8" cy="4.200" r="2.200" fill="#c4c4c4"/><path d="M4.500 8H1.500M4.500 10.500H1M5 13l-2.500 2M11.500 8h3M11.500 10.500H15M11 13l2.500 2M6 2.500 4.500.8M10 2.500 11.500.8" stroke="#c4c4c4" stroke-width="1.100"/><rect x="6.300" y="8.300" width="3.400" height="3" fill="#3c3c3c"/></svg>
<div class="a" style="left:715px;top:653px;width:1px;height:19px;background:#242424"></div>
<svg style="left:720px;top:655px" width="15" height="14" viewBox="0 0 15 14"><path d="M1 4.500h2v5H1zM4 4.500 8 1.500v11L4 9.500z" fill="#e0e0e0"/><path d="M9.800 4.500a3.300 3.300 0 0 1 0 5" fill="none" stroke="#e0e0e0" stroke-width="1.200"/><path d="M11.300 2.500a6 6 0 0 1 0 9" fill="none" stroke="#9a9a9a" stroke-width="1"/></svg>
<div class="a" style="left:741px;top:653px;width:1px;height:19px;background:#242424"></div>
<svg style="left:747px;top:657px" width="15" height="11" viewBox="0 0 15 11"><rect x=".5" y=".5" width="14" height="10" rx="1" fill="#c4c4c4"/><path d="M2 2.700h11M2 5h11" stroke="#3c3c3c" stroke-width="1.200" stroke-dasharray="1.300 1.120"/><path d="M3.500 7.800h8" stroke="#3c3c3c" stroke-width="1.300"/></svg>
<div class="a" style="left:767px;top:653px;width:1px;height:19px;background:#242424"></div>
<div class="t" style="left:773px;top:656px;font-size:12.500px;color:#c4c4c4">Stats</div>
<div class="a" style="left:807px;top:653px;width:1px;height:19px;background:#242424"></div>
<div class="t" style="left:811px;top:656px;font-size:12.500px;color:#c4c4c4">Gizmos</div>
<div class="a" style="left:860px;top:656px;width:1px;height:13px;background:#2c2c2c"></div>
<div class="tri-d" style="left:863.5px;top:660px"></div>
<div class="a" style="left:8px;top:673px;width:869px;height:337px;background:#f1f1f0;overflow:hidden">
<svg style="left:0;top:0" width="869" height="337" viewBox="8 673 869 337">
<defs><clipPath id="cpL"><path d="M105 673L8 802V997L187.500 673z"/></clipPath><clipPath id="cpR"><path d="M612.500 673H697L877 997V1010H736.700z"/></clipPath><clipPath id="cpWL"><path d="M187.500 673H256.250L121 1010H8V997z"/></clipPath><clipPath id="cpWR"><path d="M567.500 673H612.500L736.700 1010H658z"/></clipPath><clipPath id="cpF"><path d="M256.250 673H546.250L635 1010H121z"/></clipPath>
<linearGradient id="gwl" x1="150" y1="760" x2="230" y2="800" gradientUnits="userSpaceOnUse"><stop offset="0" stop-color="#bcc1c8"/><stop offset=".12" stop-color="#c4c8cd"/><stop offset="1" stop-color="#c7cbcf"/></linearGradient></defs>
<g clip-path="url(#cpF)"><path d="M100 658.2H700M100 710.9H700M100 777.1H700M100 862.7H700M100 977.5H700M-7.8 673L-323.4 1010M67.2 673L-195.8 1010M142.2 673L-68.3 1010M217.2 673L59.3 1010M292.2 673L186.8 1010M367.2 673L314.4 1010M442.2 673L441.9 1010M517.2 673L569.5 1010M592.2 673L697.0 1010M667.2 673L824.6 1010M742.2 673L952.1 1010M817.2 673L1079.7 1010" stroke="#e4e4e3" stroke-width="1.200" fill="none"/>
<path d="M100 683.2H700M100 742.1H700M100 817.0H700M100 915.6H700M179.7 673L-4.5 1010M254.7 673L123.1 1010M329.7 673L250.6 1010M404.7 673L378.1 1010M479.7 673L505.7 1010M554.7 673L633.2 1010M629.7 673L760.8 1010" stroke="#a9a9a8" stroke-width="1.400" fill="none"/>
<path d="M97.6 683.2H104.5M112.9 683.2H116.3M117.3 683.2H120.9M128.2 683.2H143.5M151.2 683.2H154.6M155.6 683.2H158.8M167.3 683.2H174.1M174.1 683.2H181.0M189.5 683.2H192.9M193.9 683.2H197.5M204.8 683.2H220.1M227.8 683.2H231.2M232.2 683.2H235.4M243.8 683.2H250.7M250.7 683.2H257.6M266.0 683.2H269.5M270.5 683.2H274.1M281.4 683.2H296.7M304.3 683.2H307.8M308.8 683.2H312.0M320.4 683.2H327.3M327.3 683.2H334.2M342.6 683.2H346.1M347.1 683.2H350.7M357.9 683.2H373.3M380.9 683.2H384.4M385.4 683.2H388.6M397.0 683.2H403.9M403.9 683.2H410.8M419.2 683.2H422.7M423.7 683.2H427.3M434.5 683.2H449.8M457.5 683.2H461.0M462.0 683.2H465.2M473.6 683.2H480.5M480.5 683.2H487.4M495.8 683.2H499.2M500.2 683.2H503.8M511.1 683.2H526.4M534.1 683.2H537.5M538.5 683.2H541.8M550.2 683.2H557.1M557.1 683.2H564.0M572.4 683.2H575.8M576.8 683.2H580.4M587.7 683.2H603.0M610.7 683.2H614.1M615.1 683.2H618.3M626.8 683.2H633.7M633.7 683.2H640.5M649.0 683.2H652.4M653.4 683.2H657.0M664.3 683.2H679.6M687.3 683.2H690.7M691.7 683.2H694.9M703.3 683.2H710.2M56.2 742.1H63.9M73.3 742.1H77.2M78.3 742.1H82.3M90.5 742.1H107.6M116.2 742.1H120.1M121.2 742.1H124.8M134.2 742.1H142.0M142.0 742.1H149.7M159.1 742.1H163.0M164.1 742.1H168.1M176.3 742.1H193.4M202.0 742.1H205.9M207.0 742.1H210.6M220.0 742.1H227.7M227.7 742.1H235.4M244.9 742.1H248.7M249.9 742.1H253.9M262.0 742.1H279.2M287.8 742.1H291.6M292.7 742.1H296.3M305.8 742.1H313.5M313.5 742.1H321.2M330.6 742.1H334.5M335.6 742.1H339.7M347.8 742.1H365.0M373.5 742.1H377.4M378.5 742.1H382.1M391.5 742.1H399.3M399.3 742.1H407.0M416.4 742.1H420.3M421.4 742.1H425.4M433.6 742.1H450.7M459.3 742.1H463.2M464.3 742.1H467.9M477.3 742.1H485.0M485.0 742.1H492.7M502.2 742.1H506.0M507.2 742.1H511.2M519.3 742.1H536.5M545.1 742.1H548.9M550.0 742.1H553.6M563.1 742.1H570.8M570.8 742.1H578.5M587.9 742.1H591.8M592.9 742.1H597.0M605.1 742.1H622.3M630.8 742.1H634.7M635.8 742.1H639.4M648.8 742.1H656.6M656.6 742.1H664.3M673.7 742.1H677.6M678.7 742.1H682.7M690.9 742.1H708.0M716.6 742.1H720.5M721.6 742.1H725.2M734.6 742.1H742.3M3.5 817.0H12.3M23.0 817.0H27.4M28.7 817.0H33.3M42.5 817.0H62.0M71.8 817.0H76.1M77.4 817.0H81.5M92.2 817.0H101.0M101.0 817.0H109.8M120.5 817.0H124.9M126.1 817.0H130.7M140.0 817.0H159.5M169.2 817.0H173.6M174.9 817.0H179.0M189.7 817.0H198.4M198.4 817.0H207.2M217.9 817.0H222.3M223.6 817.0H228.2M237.4 817.0H256.9M266.7 817.0H271.0M272.3 817.0H276.4M287.1 817.0H295.9M295.9 817.0H304.7M315.4 817.0H319.8M321.0 817.0H325.6M334.9 817.0H354.4M364.1 817.0H368.5M369.8 817.0H373.9M384.6 817.0H393.4M393.4 817.0H402.1M412.8 817.0H417.2M418.5 817.0H423.1M432.3 817.0H451.8M461.6 817.0H466.0M467.2 817.0H471.3M482.0 817.0H490.8M490.8 817.0H499.6M510.3 817.0H514.7M515.9 817.0H520.5M529.8 817.0H549.3M559.0 817.0H563.4M564.7 817.0H568.8M579.5 817.0H588.3M588.3 817.0H597.0M607.8 817.0H612.1M613.4 817.0H618.0M627.2 817.0H646.7M656.5 817.0H660.9M662.1 817.0H666.2M676.9 817.0H685.7M685.7 817.0H694.5M705.2 817.0H709.6M710.9 817.0H715.4M724.7 817.0H744.2M753.9 817.0H758.3M759.6 817.0H763.7M774.4 817.0H783.2M-65.7 915.6H-55.6M-43.2 915.6H-38.1M-36.6 915.6H-31.3M-20.6 915.6H2.0M13.3 915.6H18.3M19.8 915.6H24.5M37.0 915.6H47.1M47.1 915.6H57.3M69.7 915.6H74.8M76.2 915.6H81.5M92.2 915.6H114.8M126.1 915.6H131.2M132.6 915.6H137.4M149.8 915.6H159.9M159.9 915.6H170.1M182.5 915.6H187.6M189.0 915.6H194.3M205.1 915.6H227.6M238.9 915.6H244.0M245.5 915.6H250.2M262.6 915.6H272.8M272.8 915.6H282.9M295.3 915.6H300.4M301.9 915.6H307.2M317.9 915.6H340.5M351.7 915.6H356.8M358.3 915.6H363.0M375.4 915.6H385.6M385.6 915.6H395.7M408.2 915.6H413.2M414.7 915.6H420.0M430.7 915.6H453.3M464.6 915.6H469.6M471.1 915.6H475.8M488.3 915.6H498.4M498.4 915.6H508.6M521.0 915.6H526.1M527.5 915.6H532.8M543.5 915.6H566.1M577.4 915.6H582.5M583.9 915.6H588.7M601.1 915.6H611.2M611.2 915.6H621.4M633.8 915.6H638.9M640.3 915.6H645.6M656.4 915.6H678.9M690.2 915.6H695.3M696.8 915.6H701.5M713.9 915.6H724.1M724.1 915.6H734.2M746.6 915.6H751.7M753.2 915.6H758.5M769.2 915.6H791.8M803.0 915.6H808.1M809.6 915.6H814.3M826.7 915.6H836.9M176.7 678.5L174.1 683.2M174.1 683.2L171.5 687.9M168.3 693.9L166.9 696.4M166.5 697.1L165.1 699.7M162.1 705.1L155.7 716.9M152.4 723.0L150.9 725.7M150.4 726.5L149.0 729.2M145.2 736.2L142.0 742.1M142.0 742.1L138.7 748.1M134.6 755.6L132.9 758.7M132.4 759.6L130.5 762.9M126.8 769.8L118.6 784.7M114.4 792.5L112.5 796.0M111.9 797.0L110.1 800.4M105.1 809.4L101.0 817.0M101.0 817.0L96.8 824.8M91.4 834.5L89.2 838.6M88.5 839.8L86.2 844.1M81.3 853.0L70.6 872.6M65.0 882.9L62.4 887.6M61.7 889.0L59.2 893.5M52.6 905.5L47.1 915.6M47.1 915.6L41.4 926.0M34.2 939.2L31.2 944.7M30.3 946.3L27.1 952.2M20.5 964.3L5.8 991.2M-2.0 1005.4L-5.6 1011.9M252.6 678.5L250.7 683.2M250.7 683.2L248.9 687.9M246.5 693.9L245.6 696.4M245.3 697.1L244.3 699.7M242.1 705.1L237.6 716.9M235.2 723.0L234.1 725.7M233.8 726.5L232.8 729.2M230.0 736.2L227.7 742.1M227.7 742.1L225.4 748.1M222.4 755.6L221.2 758.7M220.9 759.6L219.6 762.9M216.9 769.8L211.1 784.7M208.0 792.5L206.6 796.0M206.2 797.0L204.9 800.4M201.4 809.4L198.4 817.0M198.4 817.0L195.4 824.8M191.6 834.5L190.0 838.6M189.6 839.8L187.9 844.1M184.4 853.0L176.7 872.6M172.7 882.9L170.9 887.6M170.3 889.0L168.6 893.5M163.9 905.5L159.9 915.6M159.9 915.6L155.9 926.0M150.7 939.2L148.6 944.7M147.9 946.3L145.6 952.2M140.9 964.3L130.4 991.2M124.8 1005.4L122.3 1011.9M328.4 678.5L327.3 683.2M327.3 683.2L326.2 687.9M324.8 693.9L324.2 696.4M324.0 697.1L323.4 699.7M322.2 705.1L319.4 716.9M318.0 723.0L317.3 725.7M317.1 726.5L316.5 729.2M314.9 736.2L313.5 742.1M313.5 742.1L312.1 748.1M310.3 755.6L309.6 758.7M309.4 759.6L308.6 762.9M307.0 769.8L303.5 784.7M301.7 792.5L300.8 796.0M300.6 797.0L299.8 800.4M297.7 809.4L295.9 817.0M295.9 817.0L294.1 824.8M291.8 834.5L290.8 838.6M290.6 839.8L289.5 844.1M287.4 853.0L282.8 872.6M280.4 882.9L279.3 887.6M279.0 889.0L278.0 893.5M275.1 905.5L272.8 915.6M272.8 915.6L270.3 926.0M267.2 939.2L265.9 944.7M265.6 946.3L264.2 952.2M261.3 964.3L255.0 991.2M251.7 1005.4L250.1 1011.9M404.3 678.5L403.9 683.2M403.9 683.2L403.5 687.9M403.1 693.9L402.9 696.4M402.8 697.1L402.6 699.7M402.2 705.1L401.2 716.9M400.8 723.0L400.5 725.7M400.5 726.5L400.3 729.2M399.7 736.2L399.3 742.1M399.3 742.1L398.8 748.1M398.2 755.6L397.9 758.7M397.9 759.6L397.6 762.9M397.1 769.8L395.9 784.7M395.3 792.5L395.0 796.0M394.9 797.0L394.7 800.4M394.0 809.4L393.4 817.0M393.4 817.0L392.7 824.8M392.0 834.5L391.7 838.6M391.6 839.8L391.2 844.1M390.5 853.0L389.0 872.6M388.2 882.9L387.8 887.6M387.7 889.0L387.3 893.5M386.4 905.5L385.6 915.6M385.6 915.6L384.8 926.0M383.7 939.2L383.3 944.7M383.2 946.3L382.7 952.2M381.7 964.3L379.6 991.2M378.5 1005.4L378.0 1011.9M480.1 678.5L480.5 683.2M480.5 683.2L480.9 687.9M481.3 693.9L481.5 696.4M481.6 697.1L481.8 699.7M482.2 705.1L483.1 716.9M483.6 723.0L483.8 725.7M483.8 726.5L484.0 729.2M484.6 736.2L485.0 742.1M485.0 742.1L485.5 748.1M486.1 755.6L486.3 758.7M486.4 759.6L486.6 762.9M487.2 769.8L488.3 784.7M488.9 792.5L489.2 796.0M489.3 797.0L489.5 800.4M490.2 809.4L490.8 817.0M490.8 817.0L491.4 824.8M492.2 834.5L492.5 838.6M492.6 839.8L492.9 844.1M493.6 853.0L495.1 872.6M495.9 882.9L496.3 887.6M496.4 889.0L496.7 893.5M497.6 905.5L498.4 915.6M498.4 915.6L499.2 926.0M500.2 939.2L500.7 944.7M500.8 946.3L501.2 952.2M502.2 964.3L504.2 991.2M505.3 1005.4L505.8 1011.9M556.0 678.5L557.1 683.2M557.1 683.2L558.2 687.9M559.6 693.9L560.2 696.4M560.3 697.1L560.9 699.7M562.2 705.1L564.9 716.9M566.3 723.0L567.0 725.7M567.2 726.5L567.8 729.2M569.4 736.2L570.8 742.1M570.8 742.1L572.2 748.1M573.9 755.6L574.7 758.7M574.9 759.6L575.7 762.9M577.3 769.8L580.7 784.7M582.5 792.5L583.4 796.0M583.6 797.0L584.4 800.4M586.5 809.4L588.3 817.0M588.3 817.0L590.1 824.8M592.3 834.5L593.3 838.6M593.6 839.8L594.6 844.1M596.7 853.0L601.2 872.6M603.6 882.9L604.7 887.6M605.0 889.0L606.1 893.5M608.9 905.5L611.2 915.6M611.2 915.6L613.7 926.0M616.7 939.2L618.0 944.7M618.4 946.3L619.8 952.2M622.6 964.3L628.9 991.2M632.2 1005.4L633.7 1011.9M631.8 678.5L633.7 683.2M633.7 683.2L635.5 687.9M637.8 693.9L638.8 696.4M639.1 697.1L640.1 699.7M642.2 705.1L646.8 716.9M649.1 723.0L650.2 725.7M650.5 726.5L651.5 729.2M654.3 736.2L656.6 742.1M656.6 742.1L658.9 748.1M661.8 755.6L663.0 758.7M663.4 759.6L664.7 762.9M667.3 769.8L673.1 784.7M676.2 792.5L677.6 796.0M678.0 797.0L679.3 800.4M682.8 809.4L685.7 817.0M685.7 817.0L688.7 824.8M692.5 834.5L694.1 838.6M694.6 839.8L696.3 844.1M699.7 853.0L707.4 872.6M711.3 882.9L713.2 887.6M713.7 889.0L715.5 893.5M720.1 905.5L724.1 915.6M724.1 915.6L728.1 926.0M733.2 939.2L735.4 944.7M736.0 946.3L738.3 952.2M743.0 964.3L753.5 991.2M759.0 1005.4L761.5 1011.9" stroke="#a2a2a1" stroke-width="3" fill="none"/>
<path d="M135.9 680.0v6.400M212.4 680.0v6.400M289.0 680.0v6.400M365.6 680.0v6.400M442.2 680.0v6.400M518.8 680.0v6.400M595.4 680.0v6.400M671.9 680.0v6.400M99.1 738.9v6.400M184.8 738.9v6.400M270.6 738.9v6.400M356.4 738.9v6.400M442.1 738.9v6.400M527.9 738.9v6.400M613.7 738.9v6.400M699.4 738.9v6.400M52.3 813.8v6.400M149.7 813.8v6.400M247.2 813.8v6.400M344.6 813.8v6.400M442.1 813.8v6.400M539.5 813.8v6.400M637.0 813.8v6.400M734.4 813.8v6.400M-9.3 912.4v6.400M103.5 912.4v6.400M216.3 912.4v6.400M329.2 912.4v6.400M442.0 912.4v6.400M554.8 912.4v6.400M667.6 912.4v6.400M780.5 912.4v6.400M155.5 710.9h7M119.3 777.1h7M72.5 862.7h7M9.7 977.5h7M236.4 710.9h7M210.5 777.1h7M177.1 862.7h7M132.2 977.5h7M317.3 710.9h7M301.8 777.1h7M281.7 862.7h7M254.7 977.5h7M398.2 710.9h7M393.0 777.1h7M386.3 862.7h7M377.2 977.5h7M479.1 710.9h7M484.2 777.1h7M490.8 862.7h7M499.7 977.5h7M560.0 710.9h7M575.5 777.1h7M595.4 862.7h7M622.2 977.5h7M641.0 710.9h7M666.7 777.1h7M700.0 862.7h7M744.7 977.5h7" stroke="#a6a6a5" stroke-width="2" fill="none"/>
<text x="101.1" y="681.0" font-family="Liberation Mono" font-size="4.1" fill="#bcbcbb" font-style="italic">1METER</text>
<text x="177.6" y="681.0" font-family="Liberation Mono" font-size="4.1" fill="#bcbcbb" font-style="italic">1METER</text>
<text x="254.2" y="681.0" font-family="Liberation Mono" font-size="4.1" fill="#bcbcbb" font-style="italic">1METER</text>
<text x="330.8" y="681.0" font-family="Liberation Mono" font-size="4.1" fill="#bcbcbb" font-style="italic">1METER</text>
<text x="407.4" y="681.0" font-family="Liberation Mono" font-size="4.1" fill="#bcbcbb" font-style="italic">1METER</text>
<text x="484.0" y="681.0" font-family="Liberation Mono" font-size="4.1" fill="#bcbcbb" font-style="italic">1METER</text>
<text x="560.6" y="681.0" font-family="Liberation Mono" font-size="4.1" fill="#bcbcbb" font-style="italic">1METER</text>
<text x="637.2" y="681.0" font-family="Liberation Mono" font-size="4.1" fill="#bcbcbb" font-style="italic">1METER</text>
<text x="59.7" y="739.9" font-family="Liberation Mono" font-size="4.6" fill="#bcbcbb" font-style="italic">1METER</text>
<text x="145.5" y="739.9" font-family="Liberation Mono" font-size="4.6" fill="#bcbcbb" font-style="italic">1METER</text>
<text x="231.2" y="739.9" font-family="Liberation Mono" font-size="4.6" fill="#bcbcbb" font-style="italic">1METER</text>
<text x="317.0" y="739.9" font-family="Liberation Mono" font-size="4.6" fill="#bcbcbb" font-style="italic">1METER</text>
<text x="402.8" y="739.9" font-family="Liberation Mono" font-size="4.6" fill="#bcbcbb" font-style="italic">1METER</text>
<text x="488.5" y="739.9" font-family="Liberation Mono" font-size="4.6" fill="#bcbcbb" font-style="italic">1METER</text>
<text x="574.3" y="739.9" font-family="Liberation Mono" font-size="4.6" fill="#bcbcbb" font-style="italic">1METER</text>
<text x="660.1" y="739.9" font-family="Liberation Mono" font-size="4.6" fill="#bcbcbb" font-style="italic">1METER</text>
<text x="7.0" y="814.8" font-family="Liberation Mono" font-size="5.3" fill="#bcbcbb" font-style="italic">1METER</text>
<text x="104.5" y="814.8" font-family="Liberation Mono" font-size="5.3" fill="#bcbcbb" font-style="italic">1METER</text>
<text x="201.9" y="814.8" font-family="Liberation Mono" font-size="5.3" fill="#bcbcbb" font-style="italic">1METER</text>
<text x="299.4" y="814.8" font-family="Liberation Mono" font-size="5.3" fill="#bcbcbb" font-style="italic">1METER</text>
<text x="396.9" y="814.8" font-family="Liberation Mono" font-size="5.3" fill="#bcbcbb" font-style="italic">1METER</text>
<text x="494.3" y="814.8" font-family="Liberation Mono" font-size="5.3" fill="#bcbcbb" font-style="italic">1METER</text>
<text x="591.8" y="814.8" font-family="Liberation Mono" font-size="5.3" fill="#bcbcbb" font-style="italic">1METER</text>
<text x="689.2" y="814.8" font-family="Liberation Mono" font-size="5.3" fill="#bcbcbb" font-style="italic">1METER</text>
<text x="-62.2" y="913.4" font-family="Liberation Mono" font-size="6.1" fill="#bcbcbb" font-style="italic">1METER</text>
<text x="50.6" y="913.4" font-family="Liberation Mono" font-size="6.1" fill="#bcbcbb" font-style="italic">1METER</text>
<text x="163.4" y="913.4" font-family="Liberation Mono" font-size="6.1" fill="#bcbcbb" font-style="italic">1METER</text>
<text x="276.3" y="913.4" font-family="Liberation Mono" font-size="6.1" fill="#bcbcbb" font-style="italic">1METER</text>
<text x="389.1" y="913.4" font-family="Liberation Mono" font-size="6.1" fill="#bcbcbb" font-style="italic">1METER</text>
<text x="501.9" y="913.4" font-family="Liberation Mono" font-size="6.1" fill="#bcbcbb" font-style="italic">1METER</text>
<text x="614.7" y="913.4" font-family="Liberation Mono" font-size="6.1" fill="#bcbcbb" font-style="italic">1METER</text>
<text x="727.6" y="913.4" font-family="Liberation Mono" font-size="6.1" fill="#bcbcbb" font-style="italic">1METER</text>
</g>
<path d="M8 673H105L8 802z" fill="#685f5a"/><path d="M697 673H877V997z" fill="#685f5a"/>
<g clip-path="url(#cpL)"><path d="M105.0 673L-131.5 1010M125.6 673L-96.5 1010M146.2 673L-61.4 1010M166.9 673L-26.3 1010M187.5 673L8.8 1010M0 648.2H890M0 660.9H890M0 674.2H890M0 688.3H890M0 703.3H890M0 719.2H890M0 736.1H890M0 754.2H890M0 773.5H890M0 794.1H890M0 816.3H890M0 840.2H890M0 865.9H890M0 893.9H890M0 924.2H890M0 957.2H890M0 993.4H890" stroke="#6e6e6e" stroke-opacity="0.6" stroke-width="1" stroke-dasharray="6 1.200" fill="none"/></g>
<g clip-path="url(#cpR)"><path d="M612.5 673L731.5 1010M633.6 673L767.5 1010M654.8 673L803.4 1010M675.9 673L839.3 1010M697.0 673L875.2 1010M0 648.2H890M0 660.9H890M0 674.2H890M0 688.3H890M0 703.3H890M0 719.2H890M0 736.1H890M0 754.2H890M0 773.5H890M0 794.1H890M0 816.3H890M0 840.2H890M0 865.9H890M0 893.9H890M0 924.2H890M0 957.2H890M0 993.4H890" stroke="#6e6e6e" stroke-opacity="0.6" stroke-width="1" stroke-dasharray="6 1.200" fill="none"/></g>
<path d="M187.500 673H256.250L121 1010H8V997z" fill="url(#gwl)"/>
<g clip-path="url(#cpWL)"><path d="M204.7 673L38.0 1010M221.9 673L67.2 1010M239.1 673L96.5 1010M200.6 648.2l81.5 65.2M193.9 660.9l83.8 67.0M186.9 674.2l86.2 68.9M179.4 688.3l88.7 70.9M171.4 703.3l91.4 73.1M163.0 719.2l94.2 75.4M154.0 736.1l97.2 77.8M144.4 754.2l100.4 80.4M134.2 773.5l103.9 83.1M123.3 794.1l107.6 86.1M111.5 816.3l111.5 89.2M98.8 840.2l115.8 92.6M85.2 865.9l120.4 96.3M70.4 893.9l125.4 100.3M54.3 924.2l130.8 104.7M36.8 957.2l136.7 109.4M17.6 993.4l143.2 114.5M272.2 513.2l57.4 45.9M265.1 526.7l59.8 47.8M257.9 540.2l62.2 49.8M250.7 553.7l64.6 51.7M243.6 567.2l67.0 53.6M236.4 580.7l69.5 55.6M229.3 594.2l71.9 57.5M222.1 607.7l74.3 59.4M214.9 621.2l76.7 61.4M207.8 634.7l79.1 63.3" stroke="#7e8286" stroke-opacity=".55" stroke-width="1" stroke-dasharray="7 1.200" fill="none"/></g>
<path d="M546.250 673H567.500L658 1010H635L616.600 980z" fill="#6583b2"/>
<path d="M543.750 673h2.500L616.600 980l2 3.500h-3.500z" fill="#6583b2" fill-opacity=".4"/>
<path d="M546.250 673h3L620 980l-3.400 0z" fill="#7d96bf" fill-opacity=".5"/>
<path d="M567.500 673H612.500L736.700 1010H658z" fill="#7f8996"/>
<g clip-path="url(#cpWR)"><path d="M578.8 673L674.1 1010M590.0 673L693.3 1010M601.2 673L712.4 1010M603.8 648.2l-51.2 55.5M608.2 660.9l-52.6 57.0M612.9 674.2l-54.1 58.6M617.9 688.3l-55.7 60.4M623.2 703.3l-57.4 62.2M628.8 719.2l-59.2 64.1M634.8 736.1l-61.1 66.2M641.2 754.2l-63.1 68.4M648.0 773.5l-65.3 70.7M655.3 794.1l-67.6 73.2M663.1 816.3l-70.1 75.9M671.5 840.2l-72.8 78.8M680.7 865.9l-75.7 82.0M690.5 893.9l-78.8 85.4M701.2 924.2l-82.2 89.0M712.9 957.2l-85.9 93.1M725.7 993.4l-90.0 97.5M565.6 540.2l-39.1 42.4M570.4 553.7l-40.6 44.0M575.1 567.2l-42.1 45.6M579.9 580.7l-43.6 47.3M584.7 594.2l-45.2 48.9M589.5 607.7l-46.7 50.6M594.2 621.2l-48.2 52.2M599.0 634.7l-49.7 53.8" stroke="#58606a" stroke-opacity=".6" stroke-width="1" stroke-dasharray="7 1.200" fill="none"/></g>
<path d="M556 673L635.5 1010" stroke="#4a6390" stroke-width="2" fill="none"/>
<path d="M549.4 683.2H570.1M562.1 742.1H585.4M578.3 817.0H604.9M599.5 915.6H630.5" stroke="#53698f" stroke-width="2" fill="none"/>
</svg>
<div class="a" style="left:15px;top:30px;width:200px;height:200px;background:rgba(20,20,20,.31)"></div>
<div class="a" style="left:36px;top:46.500px;width:157px;height:27px;background:#f5f5f5;border-radius:3px;text-align:center;font-size:24px;line-height:27px;color:#323232">Host</div>
<div class="a" style="left:36px;top:93.500px;width:157px;height:27px;background:#f5f5f5;border-radius:3px;text-align:center;font-size:24px;line-height:27px;color:#323232">Client</div>
<div class="t" style="left:62.500px;top:151px;font-size:24px;color:#fff">Players: 0</div>
</div>
<!-- ============ HIERARCHY PANEL (x 879..1486, y 81..631) ============ -->
<div class="a" style="left:879px;top:81px;width:607px;height:19px;background:#282828"></div>
<div class="a" style="left:879px;top:81px;width:96px;height:19px;background:#3c3c3c;border-radius:3px 3px 0 0"></div>
<div class="a" style="left:879px;top:100px;width:607px;height:20px;background:#3c3c3c"></div>
<div class="a" style="left:879px;top:120px;width:607px;height:1px;background:#232323"></div>
<div class="a" style="left:879px;top:121px;width:607px;height:25px;background:#3e3e3e"></div>
<div class="a" style="left:879px;top:146px;width:607px;height:485px;background:#383838"></div>
<div class="a" style="left:879px;top:146px;width:32px;height:485px;background:#323232"></div>
<div class="a" style="left:879px;top:178px;width:607px;height:16px;background:#4d4d4d"></div>
<div class="a" style="left:879px;top:178px;width:32px;height:16px;background:#474747"></div>
<svg style="left:887px;top:85px" width="12" height="11" viewBox="0 0 12 11"><path d="M3.500 1.500H12M3.500 5.500H12M3.500 9.500H12" stroke="#c4c4c4" stroke-width="1.300"/><path d="M1.200 0v10M0 1.500h2.500M1.200 5.500h1.300M1.200 9.500h1.300" stroke="#c4c4c4" stroke-width="1"/></svg>
<div class="t" style="left:903px;top:85px;font-size:12.500px;color:#c4c4c4">Hierarchy</div>
<svg style="left:1452px;top:85px" width="9" height="11" viewBox="0 0 9 11"><rect x=".6" y="5.600" width="7.800" height="4.800" rx=".5" fill="none" stroke="#c4c4c4" stroke-width="1.200"/><path d="M1.500 3.500C1.500 0 7 0 7 3v2.500" fill="none" stroke="#c4c4c4" stroke-width="1.200"/></svg>
<div class="kebab" style="left:1472px;top:85px"></div>
<svg style="left:886px;top:104px" width="12" height="12" viewBox="0 0 12 12"><path d="M6 0v12M0 6h12" stroke="#d0d0d0" stroke-width="1.800"/></svg>
<div class="tri-d" style="left:902px;top:108px"></div>
<div class="a" style="left:1157px;top:102px;width:325px;height:16px;background:#2a2a2a;border:1px solid #1e1e1e;border-radius:4px"></div>
<div class="a" style="left:1466px;top:103px;width:15px;height:14px;background:#3a3a3a;border-radius:0 3px 3px 0"></div>
<svg style="left:1162px;top:105px" width="13" height="10" viewBox="0 0 13 10"><circle cx="3.800" cy="3.800" r="2.700" fill="none" stroke="#b0b0b0" stroke-width="1.300"/><path d="M5.800 5.800 8.500 8.500" stroke="#b0b0b0" stroke-width="1.400"/><path d="M8.500 3h3.500l-1.750 2z" fill="#b0b0b0"/></svg>
<div class="t" style="left:1176px;top:104px;font-size:12.500px;color:#707070">All</div>
<svg style="left:1468px;top:104px" width="12" height="12" viewBox="0 0 12 12"><path d="M3.500 4.500V.600h7.900v7.900H7.500" fill="none" stroke="#c4c4c4" stroke-width="1"/><rect x=".6" y="7.400" width="4" height="4" fill="none" stroke="#c4c4c4" stroke-width="1"/><path d="M4.800 7.200 9.200 2.800M6.300 2.800h2.900v2.900" fill="none" stroke="#c4c4c4" stroke-width="1"/></svg>
<svg style="left:884px;top:128px" width="7" height="11" viewBox="0 0 7 11"><path d="M6 .8 1.300 5.500 6 10.200" fill="none" stroke="#9a9a9a" stroke-width="1.300"/></svg>
<svg style="left:1152px;top:126px" width="14" height="15" viewBox="0 0 14 15"><path d="M7 .3 13.500 3.800v7.300L7 14.700.5 11.100V3.800z" fill="#6fc8f0"/><path d="M7 .3 13.500 3.800 7 7.300.5 3.800z" fill="#9adcf7"/><path d="M7 7.300v7.400M.5 3.800 7 7.300l6.500-3.500" stroke="#3e3e3e" stroke-width=".9" fill="none"/></svg>
<div class="t b" style="left:1169px;top:127px;font-size:12.500px;color:#d6d6d6">Player</div>
<div class="kebab" style="left:1473px;top:129px"></div>
<!-- tree -->
<div class="fold-d" style="left:927px;top:151px"></div>
<svg style="left:940px;top:147px" width="14" height="15" viewBox="0 0 14 15" id="cubeo"><path d="M7 1 12.800 4v7L7 14 1.200 11V4zM1.200 4 7 7l5.800-3M7 7v7" fill="none" stroke="#c4c4c4" stroke-width="1.100" stroke-linejoin="round"/></svg>
<div class="t" style="left:957px;top:147.500px;font-size:12.500px;color:#c4c4c4">Player</div>
<svg style="left:954px;top:163px" width="14" height="15" viewBox="0 0 14 15"><path d="M7 1 12.800 4v7L7 14 1.200 11V4zM1.200 4 7 7l5.800-3M7 7v7" fill="none" stroke="#c4c4c4" stroke-width="1.100" stroke-linejoin="round"/></svg>
<div class="t" style="left:971px;top:163.500px;font-size:12.500px;color:#c4c4c4">Visor</div>
<svg style="left:954px;top:179px" width="14" height="15" viewBox="0 0 14 15"><path d="M7 1 12.800 4v7L7 14 1.200 11V4zM1.200 4 7 7l5.800-3M7 7v7" fill="none" stroke="#c4c4c4" stroke-width="1.100" stroke-linejoin="round"/></svg>
<div class="t" style="left:971px;top:179.500px;font-size:12.500px;color:#c4c4c4">Gun</div>
<!-- ============ INSPECTOR PANEL (x 1488..1912, y 81..1010) ============ -->
<div class="a" style="left:1488px;top:81px;width:424px;height:19px;background:#282828"></div>
<div class="a" style="left:1488px;top:81px;width:95px;height:19px;background:#3c3c3c;border-radius:3px 3px 0 0;border-top:2px solid #3a79bb"></div>
<div class="a" style="left:1488px;top:100px;width:424px;height:910px;background:#383838"></div>
<svg style="left:1496px;top:85px" width="12" height="12" viewBox="0 0 12 12"><circle cx="6" cy="6" r="5.700" fill="#c4c4c4"/><path d="M6 5.200v4" stroke="#3c3c3c" stroke-width="1.600"/><circle cx="6" cy="3.200" r="1" fill="#3c3c3c"/></svg>
<div class="t" style="left:1512px;top:85px;font-size:12.500px;color:#c4c4c4">Inspector</div>
<svg style="left:1877px;top:84px" width="9" height="11" viewBox="0 0 9 11"><rect x=".6" y="5.600" width="7.800" height="4.800" rx=".5" fill="none" stroke="#c4c4c4" stroke-width="1.200"/><path d="M1.500 3.500C1.500 0 7 0 7 3v2.500" fill="none" stroke="#c4c4c4" stroke-width="1.200"/></svg>
<div class="kebab" style="left:1897px;top:85px"></div>
<svg style="left:1495px;top:110px" width="21" height="23" viewBox="0 0 21 23"><path d="M10.500 1.200 19.500 5.800v10.800L10.500 21.500 1.500 16.600V5.800zM1.500 5.800l9 4.700 9-4.700M10.500 10.500v11" fill="none" stroke="#bdbdbd" stroke-width="1.200" stroke-linejoin="round"/></svg>
<div class="tri-d" style="left:1514px;top:131px;border-left-width:3.500px;border-right-width:3.500px;border-top-width:4px;border-top-color:#9a9a9a"></div>
<div class="cb" style="left:1536px;top:111px"></div><svg style="left:1538px;top:114px" width="10" height="8" viewBox="0 0 10 8"><path d="M1 4l2.700 2.700L9 1" fill="none" stroke="#e4e4e4" stroke-width="1.500"/></svg>
<div class="fld b" style="left:1556px;top:109px;width:275px;font-size:12.500px;color:#d6d6d6">Gun</div>
<div class="cb" style="left:1834px;top:111px"></div>
<div class="lbl" style="left:1852px;top:112px;font-size:12.500px;color:#9a9a9a">Static</div>
<div class="tri-d" style="left:1898px;top:116px"></div>
<div class="lbl" style="left:1529px;top:136px;font-size:12.500px;color:#9a9a9a">Tag</div>
<div class="dd" style="left:1556px;top:133px;width:154px;font-size:12.500px">Untagged</div>
<div class="lbl" style="left:1725px;top:136px;font-size:12.500px;color:#9a9a9a">Layer</div>
<div class="dd" style="left:1765px;top:133px;width:142px;font-size:12.500px">Default</div>
<div class="a" style="left:1488px;top:159px;width:424px;height:1px;background:#1f1f1f"></div>
<div class="a" style="left:1488px;top:160px;width:424px;height:21px;background:#3e3e3e"></div>
<div class="fold-d" style="left:1494px;top:167px"></div>
<svg style="left:1509px;top:163px" width="15" height="15" viewBox="0 0 15 15"><path d="M7.500 5.800V1.800" stroke="#a6ee4a" stroke-width="2.200" stroke-linecap="round"/><path d="M5.300 9.300 2.200 11.300" stroke="#55c0f5" stroke-width="2.200" stroke-linecap="round"/><path d="M9.700 9.300l3.100 2" stroke="#f0653a" stroke-width="2.200" stroke-linecap="round"/></svg>
<div class="lbl b" style="left:1547.500px;top:164px;font-size:13px;color:#d6d6d6;letter-spacing:.2px">Transform</div>
<svg style="left:1853px;top:164.1px" width="12" height="12" viewBox="0 0 12 12"><circle cx="6" cy="6" r="5.100" fill="#c4c4c4"/><path d="M4.200 4.600c0-2.400 3.700-2.400 3.700-.2 0 1.300-1.800 1.400-1.800 3" fill="none" stroke="#3e3e3e" stroke-width="1.400"/><circle cx="6.100" cy="9.200" r=".8" fill="#3e3e3e"/></svg>
<svg style="left:1873.500px;top:165px" width="11" height="10" viewBox="0 0 11 10"><path d="M0 2.500H5.200M8.300 2.500H10.500M0 7.500H1.800M5 7.500H10.500" stroke="#c4c4c4" stroke-width="1.200"/><path d="M7.400 0V5M4 5V10" stroke="#c4c4c4" stroke-width="1.700"/></svg>
<div class="kebab" style="left:1898px;top:165px"></div>
<div class="lbl" style="left:1507px;top:188px;font-size:12.500px;color:#c4c4c4">Position</div>
<div class="lbl" style="left:1660px;top:188px;font-size:12.500px;color:#c4c4c4">X</div>
<div class="fld" style="left:1675.5px;top:185px;width:63px;font-size:12.500px">0.5</div>
<div class="lbl" style="left:1744.5px;top:188px;font-size:12.500px;color:#c4c4c4">Y</div>
<div class="fld" style="left:1760px;top:185px;width:63.5px;font-size:12.500px">0</div>
<div class="lbl" style="left:1829px;top:188px;font-size:12.500px;color:#c4c4c4">Z</div>
<div class="fld" style="left:1844.5px;top:185px;width:63px;font-size:12.500px">0.5</div>
<div class="lbl" style="left:1507px;top:208px;font-size:12.500px;color:#c4c4c4">Rotation</div>
<div class="lbl" style="left:1660px;top:208px;font-size:12.500px;color:#c4c4c4">X</div>
<div class="fld" style="left:1675.5px;top:205px;width:63px;font-size:12.500px">90</div>
<div class="lbl" style="left:1744.5px;top:208px;font-size:12.500px;color:#c4c4c4">Y</div>
<div class="fld" style="left:1760px;top:205px;width:63.5px;font-size:12.500px">0</div>
<div class="lbl" style="left:1829px;top:208px;font-size:12.500px;color:#c4c4c4">Z</div>
<div class="fld" style="left:1844.5px;top:205px;width:63px;font-size:12.500px">0</div>
<div class="lbl" style="left:1507px;top:228px;font-size:12.500px;color:#c4c4c4">Scale</div>
<div class="lbl" style="left:1660px;top:228px;font-size:12.500px;color:#c4c4c4">X</div>
<div class="fld" style="left:1675.5px;top:225px;width:63px;font-size:12.500px">0.25</div>
<div class="lbl" style="left:1744.5px;top:228px;font-size:12.500px;color:#c4c4c4">Y</div>
<div class="fld" style="left:1760px;top:225px;width:63.5px;font-size:12.500px">0.5</div>
<div class="lbl" style="left:1829px;top:228px;font-size:12.500px;color:#c4c4c4">Z</div>
<div class="fld" style="left:1844.5px;top:225px;width:63px;font-size:12.500px">0.25</div>
<svg style="left:1637px;top:228px" width="14" height="12" viewBox="0 0 14 12"><path d="M5.500 3.500H3.500a2.500 2.500 0 0 0 0 5h2M8.500 3.500h2a2.500 2.500 0 0 1 0 5h-2" fill="none" stroke="#c4c4c4" stroke-width="1.200"/><path d="M1.500 1 12.500 11" stroke="#383838" stroke-width="2.600"/><path d="M1.500 1 12.500 11" stroke="#c4c4c4" stroke-width="1.100"/></svg>
<div class="a" style="left:1488px;top:252px;width:424px;height:1px;background:#1f1f1f"></div>
<div class="a" style="left:1488px;top:253px;width:424px;height:21px;background:#3e3e3e"></div>
<div class="tri-r" style="left:1496px;top:259px;border-left-color:#707070"></div>
<svg style="left:1509px;top:256px" width="15" height="15" viewBox="0 0 15 15"><path d="M.6.600h13.800v13.800H.6zM.6 5.200h13.800M.6 9.800h13.800M5.200.600v13.800M9.800.600v13.800" fill="none" stroke="#7fd0f5" stroke-width="1.100"/></svg>
<div class="lbl b" style="left:1547.500px;top:257px;font-size:13px;color:#d6d6d6;letter-spacing:.2px">Cylinder (Mesh Filter)</div>
<svg style="left:1853px;top:257.1px" width="12" height="12" viewBox="0 0 12 12"><circle cx="6" cy="6" r="5.100" fill="#c4c4c4"/><path d="M4.200 4.600c0-2.400 3.700-2.400 3.700-.2 0 1.300-1.800 1.400-1.800 3" fill="none" stroke="#3e3e3e" stroke-width="1.400"/><circle cx="6.100" cy="9.200" r=".8" fill="#3e3e3e"/></svg>
<svg style="left:1873.500px;top:258px" width="11" height="10" viewBox="0 0 11 10"><path d="M0 2.500H5.200M8.300 2.500H10.500M0 7.500H1.800M5 7.500H10.500" stroke="#c4c4c4" stroke-width="1.200"/><path d="M7.400 0V5M4 5V10" stroke="#c4c4c4" stroke-width="1.700"/></svg>
<div class="kebab" style="left:1898px;top:258px"></div>
<div class="a" style="left:1488px;top:274px;width:424px;height:1px;background:#1f1f1f"></div>
<div class="a" style="left:1488px;top:275px;width:424px;height:21px;background:#3e3e3e"></div>
<div class="tri-r" style="left:1496px;top:281px;border-left-color:#707070"></div>
<svg style="left:1509px;top:278px" width="15" height="15" viewBox="0 0 15 15"><path d="M.6.600h13.800v9H.6zM.6 5.200h13.800M5.200.600v9M9.800.600v9" fill="none" stroke="#7fd0f5" stroke-width="1.100"/><path d="M3.500 12C6 8.500 12 8.500 14.500 12 12 15 6 15 3.500 12z" fill="#3e3e3e" stroke="#d0d0d0" stroke-width="1.100"/><circle cx="9" cy="12" r="1.500" fill="#d0d0d0"/></svg>
<div class="cb" style="left:1528px;top:278.5px"></div><svg style="left:1530px;top:281.5px" width="10" height="8" viewBox="0 0 10 8"><path d="M1 4l2.700 2.700L9 1" fill="none" stroke="#e4e4e4" stroke-width="1.500"/></svg>
<div class="lbl b" style="left:1547.500px;top:279px;font-size:13px;color:#d6d6d6;letter-spacing:.2px">Mesh Renderer</div>
<svg style="left:1853px;top:279.1px" width="12" height="12" viewBox="0 0 12 12"><circle cx="6" cy="6" r="5.100" fill="#c4c4c4"/><path d="M4.200 4.600c0-2.400 3.700-2.400 3.700-.2 0 1.300-1.800 1.400-1.800 3" fill="none" stroke="#3e3e3e" stroke-width="1.400"/><circle cx="6.100" cy="9.200" r=".8" fill="#3e3e3e"/></svg>
<svg style="left:1873.500px;top:280px" width="11" height="10" viewBox="0 0 11 10"><path d="M0 2.500H5.200M8.300 2.500H10.500M0 7.500H1.800M5 7.500H10.500" stroke="#c4c4c4" stroke-width="1.200"/><path d="M7.400 0V5M4 5V10" stroke="#c4c4c4" stroke-width="1.700"/></svg>
<div class="kebab" style="left:1898px;top:280px"></div>
<div class="a" style="left:1488px;top:296px;width:424px;height:1px;background:#1f1f1f"></div>
<div class="a" style="left:1488px;top:297px;width:424px;height:21px;background:#3e3e3e"></div>
<div class="fold-d" style="left:1494px;top:304px"></div>
<svg style="left:1509px;top:300px" width="15" height="15" viewBox="0 0 15 15"><rect x="3" y=".5" width="9" height="14" rx="4.500" fill="#a6ee3c"/><path d="M7.500.500v14M3 7.500h9" stroke="#3e5a1c" stroke-width="1"/></svg>
<div class="cb" style="left:1528px;top:300.5px;border-color:#3a79bb"></div>
<div class="lbl b" style="left:1547.500px;top:301px;font-size:13px;color:#d6d6d6;letter-spacing:.2px">Capsule Collider</div>
<svg style="left:1853px;top:301.1px" width="12" height="12" viewBox="0 0 12 12"><circle cx="6" cy="6" r="5.100" fill="#c4c4c4"/><path d="M4.200 4.600c0-2.400 3.700-2.400 3.700-.2 0 1.300-1.800 1.400-1.800 3" fill="none" stroke="#3e3e3e" stroke-width="1.400"/><circle cx="6.100" cy="9.200" r=".8" fill="#3e3e3e"/></svg>
<svg style="left:1873.500px;top:302px" width="11" height="10" viewBox="0 0 11 10"><path d="M0 2.500H5.200M8.300 2.500H10.500M0 7.500H1.800M5 7.500H10.500" stroke="#c4c4c4" stroke-width="1.200"/><path d="M7.400 0V5M4 5V10" stroke="#c4c4c4" stroke-width="1.700"/></svg>
<div class="kebab" style="left:1898px;top:302px"></div>
<div class="lbl" style="left:1507px;top:325px;font-size:12.500px;color:#c4c4c4">Edit Collider</div>
<div class="a" style="left:1658px;top:324px;width:32px;height:22px;background:#383838;border:1px solid #232323;border-radius:3px"></div>
<svg style="left:1666px;top:328px" width="15" height="14" viewBox="0 0 15 14"><path d="M3 11 6.500 3h2L12 9" fill="none" stroke="#c8c8c8" stroke-width="1.100"/><rect x="5.800" y="1" width="3.200" height="3.200" fill="#383838" stroke="#c8c8c8" stroke-width="1"/><rect x="1.200" y="9.500" width="3.200" height="3.200" fill="#383838" stroke="#c8c8c8" stroke-width="1"/><rect x="10.500" y="7.500" width="3.200" height="3.200" fill="#383838" stroke="#c8c8c8" stroke-width="1"/></svg>
<div class="lbl" style="left:1507px;top:354px;font-size:12.500px;color:#c4c4c4">Is Trigger</div>
<div class="cb" style="left:1659px;top:353px"></div>
<div class="lbl" style="left:1507px;top:374px;font-size:12.500px;color:#c4c4c4">Provides Contacts</div>
<div class="cb" style="left:1659px;top:373px"></div>
<div class="lbl" style="left:1507px;top:394px;font-size:12.500px;color:#c4c4c4">Material</div>
<div class="fld" style="left:1659px;top:391px;width:249px;font-size:12.500px">None (Physic Material)</div>
<div class="a" style="left:1888px;top:392px;width:19px;height:16px;background:#373737;border-radius:0 2px 2px 0"></div><svg style="left:1892px;top:394.500px" width="11" height="11" viewBox="0 0 11 11"><circle cx="5.500" cy="5.500" r="4.700" fill="none" stroke="#c4c4c4" stroke-width="1.100"/><circle cx="5.500" cy="5.500" r="1.600" fill="#c4c4c4"/></svg>
<div class="lbl" style="left:1507px;top:414px;font-size:12.500px;color:#c4c4c4">Center</div>
<div class="lbl" style="left:1660px;top:414px;font-size:12.500px;color:#c4c4c4">X</div>
<div class="fld" style="left:1675px;top:411px;width:64px;font-size:12.500px">5.960464e-08</div>
<div class="lbl" style="left:1744.5px;top:414px;font-size:12.500px;color:#c4c4c4">Y</div>
<div class="fld" style="left:1760px;top:411px;width:64px;font-size:12.500px">0</div>
<div class="lbl" style="left:1829px;top:414px;font-size:12.500px;color:#c4c4c4">Z</div>
<div class="fld" style="left:1844.5px;top:411px;width:63.5px;font-size:12.500px">-8.940697e-08</div>
<div class="lbl" style="left:1507px;top:434px;font-size:12.500px;color:#c4c4c4">Radius</div>
<div class="fld" style="left:1659px;top:431px;width:249px;font-size:12.500px">0.5000001</div>
<div class="lbl" style="left:1507px;top:454px;font-size:12.500px;color:#c4c4c4">Height</div>
<div class="fld" style="left:1659px;top:451px;width:249px;font-size:12.500px">2</div>
<div class="lbl" style="left:1507px;top:474px;font-size:12.500px;color:#c4c4c4">Direction</div>
<div class="dd" style="left:1659px;top:471px;width:249px;font-size:12.500px">Y-Axis</div>
<div class="tri-r" style="left:1496px;top:496px;border-left-color:#707070"></div>
<div class="lbl" style="left:1507px;top:494px;font-size:12.500px;color:#c4c4c4">Layer Overrides</div>
<div class="a" style="left:1488px;top:515px;width:424px;height:1px;background:#1f1f1f"></div>
<div class="a" style="left:1488px;top:516px;width:424px;height:54px;background:#3c3c3c"></div>
<svg style="left:1503px;top:520px" width="34" height="34" viewBox="0 0 34 34"><defs><radialGradient id="gsph" cx=".38" cy=".32" r=".75"><stop offset="0" stop-color="#d6d6d6"/><stop offset=".55" stop-color="#9a9a9a"/><stop offset="1" stop-color="#4a4a4a"/></radialGradient></defs><rect width="34" height="34" fill="#3a3a3a"/><circle cx="17" cy="17" r="15" fill="url(#gsph)"/></svg>
<div class="lbl" style="left:1544px;top:522px;font-size:14px;color:#bdbdbd">Default-Material (Material)</div>
<svg style="left:1882px;top:523px" width="12" height="12" viewBox="0 0 12 12"><circle cx="6" cy="6" r="5.100" fill="#c4c4c4"/><path d="M4.200 4.600c0-2.400 3.700-2.400 3.700-.2 0 1.300-1.800 1.400-1.800 3" fill="none" stroke="#3e3e3e" stroke-width="1.400"/><circle cx="6.100" cy="9.200" r=".8" fill="#3e3e3e"/></svg>
<div class="kebab" style="left:1903px;top:524px"></div>
<div class="tri-r" style="left:1495px;top:555px;border-left-color:#707070"></div>
<div class="lbl" style="left:1541px;top:549px;font-size:12.500px;color:#8a8a8a">Shader</div>
<div class="dd" style="left:1592.500px;top:546px;width:218px;font-size:12.500px;background:#464646;color:#9a9a9a">Standard</div>
<div class="a" style="left:1816px;top:545px;width:44px;height:17px;background:#585858;border-radius:3px;border:1px solid #303030;text-align:center;font-size:12.500px;line-height:14px;color:#e4e4e4">Edit...</div>
<div class="dd" style="left:1864.500px;top:546px;width:43px;font-size:12.500px;background:#515151"></div>
<svg style="left:1873px;top:550px" width="11" height="10" viewBox="0 0 11 10"><path d="M3 1.500h8M3 5h8M3 8.500h8" stroke="#c4c4c4" stroke-width="1.200"/><path d="M1 .5v8M0 1.500h2M1 5h1.500M1 8.500h1.500" stroke="#c4c4c4" stroke-width=".9"/></svg>
<div class="a" style="left:1488px;top:570px;width:424px;height:1px;background:#1f1f1f"></div>
<div class="a" style="left:1488px;top:581px;width:424px;height:1px;background:#1f1f1f"></div>
<div class="a" style="left:1586px;top:591px;width:228px;height:22px;background:#585858;border-radius:3px;border:1px solid #303030;text-align:center;font-size:12.500px;line-height:20px;color:#e4e4e4">Add Component</div>
<!-- ============ PROJECT PANEL (x 879..1486, y 633..1010) ============ -->
<div class="a" style="left:879px;top:633px;width:607px;height:19px;background:#282828"></div>
<div class="a" style="left:879px;top:633px;width:81px;height:19px;background:#3c3c3c;border-radius:3px 3px 0 0"></div>
<div class="a" style="left:879px;top:652px;width:607px;height:20px;background:#3c3c3c"></div>
<div class="a" style="left:879px;top:672px;width:607px;height:1px;background:#232323"></div>
<div class="a" style="left:879px;top:673px;width:208px;height:337px;background:#383838"></div>
<div class="a" style="left:1087px;top:673px;width:1px;height:337px;background:#232323"></div>
<div class="a" style="left:1088px;top:673px;width:398px;height:337px;background:#333"></div>
<div class="a" style="left:1088px;top:673px;width:398px;height:21px;background:#404040"></div>
<div class="a" style="left:1088px;top:989px;width:398px;height:21px;background:#404040"></div>
<svg style="left:887px;top:636px" width="13" height="12" viewBox="0 0 13 12"><path d="M.5 2.200c0-.6.400-1 1-1h3.200l1.300 1.400h5c.6 0 1 .4 1 1v6.900c0 .6-.4 1-1 1h-9.500c-.6 0-1-.4-1-1z" fill="#c2c2c2"/></svg>
<div class="t" style="left:903px;top:637px;font-size:12.500px;color:#c4c4c4">Project</div>
<svg style="left:1452px;top:637px" width="9" height="11" viewBox="0 0 9 11"><rect x=".6" y="5.600" width="7.800" height="4.800" rx=".5" fill="none" stroke="#c4c4c4" stroke-width="1.200"/><path d="M1.500 3.500C1.500 0 7 0 7 3v2.500" fill="none" stroke="#c4c4c4" stroke-width="1.200"/></svg>
<div class="kebab" style="left:1472px;top:638px"></div>
<svg style="left:886px;top:656px" width="12" height="12" viewBox="0 0 12 12"><path d="M6 0v12M0 6h12" stroke="#d0d0d0" stroke-width="1.800"/></svg>
<div class="tri-d" style="left:902px;top:660px"></div>
<div class="a" style="left:1020px;top:654px;width:318px;height:16px;background:#2a2a2a;border:1px solid #1e1e1e;border-radius:4px"></div>
<div class="a" style="left:1321px;top:655px;width:16px;height:14px;background:#3a3a3a;border-radius:0 3px 3px 0"></div>
<svg style="left:1025px;top:658px" width="9" height="9" viewBox="0 0 9 9"><circle cx="3.300" cy="3.300" r="2.400" fill="none" stroke="#d0d0d0" stroke-width="1.300"/><path d="M5 5 7.800 7.800" stroke="#d0d0d0" stroke-width="1.500"/></svg>
<svg style="left:1323px;top:656px" width="12" height="12" viewBox="0 0 12 12"><path d="M3.500 4.500V.600h7.900v7.900H7.500" fill="none" stroke="#c4c4c4" stroke-width="1"/><rect x=".6" y="7.400" width="4" height="4" fill="none" stroke="#c4c4c4" stroke-width="1"/><path d="M4.800 7.200 9.200 2.800M6.300 2.800h2.900v2.900" fill="none" stroke="#c4c4c4" stroke-width="1"/></svg>
<div class="a" style="left:1340px;top:653px;width:1px;height:19px;background:#2a2a2a"></div>
<div class="a" style="left:1366px;top:653px;width:1px;height:19px;background:#2a2a2a"></div>
<div class="a" style="left:1392px;top:653px;width:1px;height:19px;background:#2a2a2a"></div>
<div class="a" style="left:1418px;top:653px;width:1px;height:19px;background:#2a2a2a"></div>
<div class="a" style="left:1444px;top:653px;width:1px;height:19px;background:#2a2a2a"></div>
<svg style="left:1346px;top:655px" width="14" height="14" viewBox="0 0 14 14"><rect x="2" y=".5" width="6" height="5.500" fill="#c4c4c4"/><circle cx="4.300" cy="10" r="3.600" fill="#c4c4c4"/><path d="M10 3.500 13.500 10h-5.500z" fill="#c4c4c4"/></svg>
<svg style="left:1372px;top:656px" width="13" height="12" viewBox="0 0 13 12"><path d="M7 .8h4.700v4.700L5.500 11.500.8 6.800z" fill="#c4c4c4"/><circle cx="9.500" cy="3" r="1" fill="#3c3c3c"/></svg>
<svg style="left:1397px;top:655px" width="14" height="14" viewBox="0 0 14 14"><path d="M4.200.5h5.600L13.500 4.200v5.600L9.800 13.500H4.200L.5 9.800V4.200z" fill="#d8d8d8"/><path d="M7 3v5" stroke="#3c3c3c" stroke-width="1.700"/><circle cx="7" cy="10.300" r="1" fill="#3c3c3c"/></svg>
<svg style="left:1424px;top:655px" width="14" height="13" viewBox="0 0 14 13"><path d="M7 .5l1.900 4.200 4.600.5-3.400 3.100.9 4.500L7 10.500 3 12.800l.9-4.500L.5 5.200l4.600-.5z" fill="#9a9a9a"/></svg>
<svg style="left:1450px;top:655px" width="16" height="14" viewBox="0 0 16 14"><path d="M1 7C3.500 3.500 5.800 2.500 8 2.500S12.500 3.500 15 7C12.500 10.500 10.200 11.500 8 11.500S3.500 10.500 1 7z" fill="none" stroke="#c4c4c4" stroke-width="1.200"/><circle cx="8" cy="7" r="2" fill="#c4c4c4"/><path d="M2.500 12.800 13.500 1" stroke="#3c3c3c" stroke-width="2.800"/><path d="M2.500 12.800 13.500 1" stroke="#c4c4c4" stroke-width="1.200"/></svg>
<div class="t" style="left:1467px;top:656px;font-size:12.500px;color:#bdbdbd">29</div>
<div class="fold-d" style="left:883px;top:677.5px"></div>
<svg style="left:897px;top:674.5px" width="12" height="12" viewBox="0 0 12 12"><path d="M6 .3l1.700 3.800 4.100.4-3.100 2.800.9 4.100L6 9.300 2.400 11.400l.9-4.100L.2 4.500l4.100-.4z" fill="#d0d0d0"/></svg>
<div class="t b" style="left:914px;top:674.5px;font-size:12.500px;color:#c8c8c8">Favorites</div>
<svg style="left:911px;top:690.5px" width="13" height="13" viewBox="0 0 13 13"><circle cx="5" cy="5" r="4" fill="none" stroke="#c4c4c4" stroke-width="1.100"/><path d="M8 8l4 4" stroke="#c4c4c4" stroke-width="1.600"/></svg>
<div class="t" style="left:927px;top:690.5px;font-size:12.500px;color:#c8c8c8">All Materials</div>
<svg style="left:911px;top:706.5px" width="13" height="13" viewBox="0 0 13 13"><circle cx="5" cy="5" r="4" fill="none" stroke="#c4c4c4" stroke-width="1.100"/><path d="M8 8l4 4" stroke="#c4c4c4" stroke-width="1.600"/></svg>
<div class="t" style="left:927px;top:706.5px;font-size:12.500px;color:#c8c8c8">All Models</div>
<svg style="left:911px;top:722.5px" width="13" height="13" viewBox="0 0 13 13"><circle cx="5" cy="5" r="4" fill="none" stroke="#c4c4c4" stroke-width="1.100"/><path d="M8 8l4 4" stroke="#c4c4c4" stroke-width="1.600"/></svg>
<div class="t" style="left:927px;top:722.5px;font-size:12.500px;color:#c8c8c8">All Prefabs</div>
<div class="fold-d" style="left:883px;top:756.5px"></div>
<svg style="left:897px;top:753.5px" width="14" height="12" viewBox="0 0 14 12"><path d="M.8 10.500V2c0-.5.400-.8.800-.8h3l1.200 1.300h4.700c.5 0 .8.400.8.800v1.200" fill="none" stroke="#c2c2c2" stroke-width="1.200"/><path d="M2.800 5h10.700l-2 6H.8z" fill="#c2c2c2"/></svg>
<div class="t b" style="left:914px;top:753.5px;font-size:12.500px;color:#c8c8c8">Assets</div>
<svg style="left:911px;top:769.5px" width="13" height="12" viewBox="0 0 13 12"><path d="M.5 2.200c0-.6.400-1 1-1h3.200l1.300 1.400h5c.6 0 1 .4 1 1v6.900c0 .6-.4 1-1 1h-9.500c-.6 0-1-.4-1-1z" fill="#c2c2c2"/></svg>
<div class="t" style="left:927.5px;top:769.5px;font-size:12.500px;color:#c8c8c8">Materials</div>
<div class="tri-r" style="left:899px;top:787.0px;border-left-color:#6a6a6a"></div>
<svg style="left:911px;top:785.5px" width="13" height="12" viewBox="0 0 13 12"><path d="M.5 2.200c0-.6.400-1 1-1h3.200l1.300 1.400h5c.6 0 1 .4 1 1v6.900c0 .6-.4 1-1 1h-9.500c-.6 0-1-.4-1-1z" fill="#c2c2c2"/></svg>
<div class="t" style="left:927.5px;top:785.5px;font-size:12.500px;color:#c8c8c8">Plugins</div>
<div class="a" style="left:879px;top:799.5px;width:208px;height:16px;background:#4d4d4d"></div>
<svg style="left:911px;top:801.5px" width="13" height="12" viewBox="0 0 13 12"><path d="M.5 2.200c0-.6.400-1 1-1h3.200l1.300 1.400h5c.6 0 1 .4 1 1v6.900c0 .6-.4 1-1 1h-9.500c-.6 0-1-.4-1-1z" fill="#c2c2c2"/></svg>
<div class="t" style="left:927.5px;top:801.5px;font-size:12.500px;color:#c8c8c8">Prefab</div>
<div class="tri-r" style="left:899px;top:819.0px;border-left-color:#6a6a6a"></div>
<svg style="left:911px;top:817.5px" width="13" height="12" viewBox="0 0 13 12"><path d="M.5 2.200c0-.6.400-1 1-1h3.200l1.300 1.400h5c.6 0 1 .4 1 1v6.900c0 .6-.4 1-1 1h-9.500c-.6 0-1-.4-1-1z" fill="#c2c2c2"/></svg>
<div class="t" style="left:927.5px;top:817.5px;font-size:12.500px;color:#c8c8c8">Samples</div>
<svg style="left:911px;top:833.5px" width="13" height="12" viewBox="0 0 13 12"><path d="M.5 2.200c0-.6.400-1 1-1h3.200l1.300 1.400h5c.6 0 1 .4 1 1v6.900c0 .6-.4 1-1 1h-9.500c-.6 0-1-.4-1-1z" fill="#c2c2c2"/></svg>
<div class="t" style="left:927.5px;top:833.5px;font-size:12.500px;color:#c8c8c8">Scenes</div>
<svg style="left:911px;top:849.5px" width="13" height="12" viewBox="0 0 13 12"><path d="M.5 2.200c0-.6.400-1 1-1h3.200l1.300 1.400h5c.6 0 1 .4 1 1v6.900c0 .6-.4 1-1 1h-9.500c-.6 0-1-.4-1-1z" fill="#c2c2c2"/></svg>
<div class="t" style="left:927.5px;top:849.5px;font-size:12.500px;color:#c8c8c8">Scripts</div>
<div class="tri-r" style="left:899px;top:867.0px;border-left-color:#6a6a6a"></div>
<svg style="left:911px;top:865.5px" width="13" height="12" viewBox="0 0 13 12"><path d="M.5 2.200c0-.6.400-1 1-1h3.200l1.300 1.400h5c.6 0 1 .4 1 1v6.900c0 .6-.4 1-1 1h-9.500c-.6 0-1-.4-1-1z" fill="#c2c2c2"/></svg>
<div class="t" style="left:927.5px;top:865.5px;font-size:12.500px;color:#c8c8c8">TextMesh Pro</div>
<div class="tri-r" style="left:885px;top:883.0px;border-left-color:#6a6a6a"></div>
<svg style="left:897px;top:881.5px" width="13" height="12" viewBox="0 0 13 12"><path d="M.5 2.200c0-.6.400-1 1-1h3.200l1.300 1.400h5c.6 0 1 .4 1 1v6.900c0 .6-.4 1-1 1h-9.500c-.6 0-1-.4-1-1z" fill="#c2c2c2"/></svg>
<div class="t b" style="left:914px;top:881.5px;font-size:12.500px;color:#c8c8c8">Packages</div>
<div class="t" style="left:1092px;top:676.500px;font-size:12.500px;color:#a0a0a0">Assets</div>
<svg style="left:1137px;top:678px" width="7" height="10" viewBox="0 0 7 10"><path d="M1 .8 5.800 5 1 9.200" fill="none" stroke="#a0a0a0" stroke-width="1.200"/></svg>
<div class="t b" style="left:1148.500px;top:676.500px;font-size:12.500px;color:#c8c8c8">Prefab</div>
<svg style="left:1104px;top:694.500px" width="14" height="15" viewBox="0 0 14 15"><path d="M7 .3 13.500 3.800v7.300L7 14.700.5 11.100V3.800z" fill="#6fc8f0"/><path d="M7 .3 13.500 3.800 7 7.300.5 3.800z" fill="#9adcf7"/><path d="M7 7.300v7.400M.5 3.800 7 7.300l6.500-3.500" stroke="#333" stroke-width=".9" fill="none"/></svg>
<div class="t" style="left:1122px;top:696px;font-size:12.500px;color:#c8c8c8">Player</div>
<div class="a" style="left:1420px;top:999.500px;width:50px;height:1.500px;background:#5e5e5e"></div>
<div class="a" style="left:1414.500px;top:995px;width:10px;height:10px;border-radius:5px;background:#999"></div>
<!-- ============ STATUS BAR (y 1010..1032) ============ -->
<div class="a" style="left:8px;top:1010px;width:1904px;height:22px;background:#191919"></div>
<div class="a" style="left:1806px;top:1012px;width:1px;height:19px;background:#2c2c2c"></div>
<div class="a" style="left:1832px;top:1012px;width:1px;height:19px;background:#2c2c2c"></div>
<div class="a" style="left:1859px;top:1012px;width:1px;height:19px;background:#2c2c2c"></div>
<div class="a" style="left:1885px;top:1012px;width:1px;height:19px;background:#2c2c2c"></div>
<svg style="left:1811px;top:1014px" width="15" height="15" viewBox="0 0 15 15"><ellipse cx="7.500" cy="9" rx="3.400" ry="4.300" fill="#c4c4c4"/><circle cx="7.500" cy="4" r="2" fill="#c4c4c4"/><path d="M4 7.500H1.500M4 10H1M4.500 12.500 2.500 14M11 7.500h2.500M11 10h3M10.500 12.500l2 1.500" stroke="#c4c4c4" stroke-width="1"/><path d="M1.500 1.500 13.500 14" stroke="#191919" stroke-width="2.600"/><path d="M1.500 1.500 13.500 14" stroke="#c4c4c4" stroke-width="1.100"/></svg>
<svg style="left:1838px;top:1014px" width="15" height="15" viewBox="0 0 15 15"><ellipse cx="7.500" cy="3.500" rx="5.500" ry="2.500" fill="#c4c4c4"/><path d="M2 5.500c0 3 11 3 11 0v2.500c0 3-11 3-11 0zM2 9.500c0 3 11 3 11 0V12c0 3-11 3-11 0z" fill="#c4c4c4"/><path d="M1.500 1.500 13.500 14" stroke="#191919" stroke-width="2.600"/><path d="M1.500 1.500 13.500 14" stroke="#c4c4c4" stroke-width="1.100"/></svg>
<svg style="left:1864px;top:1014px" width="15" height="15" viewBox="0 0 15 15"><circle cx="7.500" cy="7.500" r="5.800" fill="none" stroke="#c4c4c4" stroke-width="1.200"/><path d="M7.500 1.500c-2 2.500-2 9.500 0 12M2 7.500h11M7.500 1.500c2 2.500 2 9.500 0 12" stroke="#c4c4c4" stroke-width="1" fill="none"/><path d="M1.500 1.500 13.500 14" stroke="#191919" stroke-width="2.600"/><path d="M1.500 1.500 13.500 14" stroke="#c4c4c4" stroke-width="1.100"/></svg>
<svg style="left:1890px;top:1014px" width="15" height="15" viewBox="0 0 15 15"><circle cx="7.500" cy="7.500" r="6.300" fill="none" stroke="#c4c4c4" stroke-width="1.200"/><path d="M4.500 7.500l2.200 2.200L10.800 5.500" fill="none" stroke="#c4c4c4" stroke-width="1.400"/></svg>
<!-- photoshop strip y 1032..1040 -->
<div class="a" style="left:0;top:1032px;width:1920px;height:8px;background:#3f3f3f;overflow:hidden">
<div class="a" style="left:0;top:0;width:8px;height:8px;background:#383838"></div>
<div class="a" style="left:40px;top:0;width:1px;height:8px;background:#2e2e2e"></div>
<div class="a" style="left:112px;top:0;width:1px;height:8px;background:#2e2e2e"></div><div class="a" style="left:113px;top:0;width:221px;height:7px;background:#474747"></div>
<div class="a" style="left:334px;top:0;width:1px;height:8px;background:#2e2e2e"></div>
<div class="t" style="left:48px;top:-5px;font-size:9.800px;color:#c0c0c0;letter-spacing:0">66,67%</div>
<div class="a" style="left:96px;top:-3px;width:9px;height:9px;border-radius:5px;background:#777"></div>
<div class="t" style="left:174px;top:-5px;font-size:9.700px;color:#c0c0c0;letter-spacing:0">Doc: 3,93 MB/3,93 MB</div>
<div class="a" style="left:338px;top:-1px;width:0;height:0;border-top:4px solid transparent;border-bottom:4px solid transparent;border-left:6px solid #bbb"></div>
<div class="a" style="left:1618px;top:0;width:15px;height:6px;background:#2e2e2e"></div>
<div class="a" style="left:1637px;top:0;width:36px;height:6px;background:#2e2e2e"></div>
<div class="a" style="left:1677px;top:0;width:235px;height:6px;background:#333"></div>
<div class="a" style="left:1742px;top:-5px;width:12px;height:8px;background:#6a6a6a"></div>
<div class="a" style="left:1771px;top:-4px;width:12px;height:7px;border-radius:0 0 6px 6px;border:1px solid #777"></div>
<div class="a" style="left:1826px;top:-2px;width:11px;height:4px;background:#6a6a6a"></div>
<div class="a" style="left:1853px;top:-4px;width:10px;height:8px;background:#555"></div>
<div class="a" style="left:1880px;top:-4px;width:9px;height:8px;border:1px solid #6a6a6a;border-top:none"></div>
<div class="a" style="left:1912px;top:0;width:8px;height:8px;background:#2b2b2b"></div>
</div>
<!-- ============ WINDOWS TASKBAR (y 1040..1080) ============ -->
<div class="a" style="left:0;top:1040px;width:1920px;height:40px;background:#1d1d1d"></div>
<svg style="left:16px;top:1052px" width="17" height="17" viewBox="0 0 17 17"><path d="M0 2.300 6.900 1.400v6.700H0zM7.800 1.250 17 0v8.100H7.800zM0 8.900h6.900v6.700L0 14.700zM7.800 8.900H17V17l-9.200-1.250z" fill="#fff"/></svg>
<div class="a" style="left:48px;top:1040px;width:288px;height:40px;background:#2b2b2b;border:1px solid #454545;border-bottom:none"></div>
<svg style="left:59px;top:1051px" width="18" height="18" viewBox="0 0 18 18"><circle cx="11" cy="7" r="5.200" fill="none" stroke="#e8e8e8" stroke-width="1.400"/><path d="M7.300 10.700 1.500 16.500" stroke="#e8e8e8" stroke-width="1.500"/></svg>
<div class="t" style="left:88px;top:1052px;font-size:15px;color:#dcdcdc;letter-spacing:-.1px">Escriu aquí per cercar</div>
<!-- illustration -->
<svg style="left:256px;top:1041px" width="80" height="39" viewBox="0 0 80 39"><path d="M0 39 17 24.500H80V39z" fill="#e3bc8a"/><path d="M17 24.500H80v1.500H15.300z" fill="#f0d2a6"/><path d="M14 17 28 12.500l8 13.500-14 5z" fill="#4aa85c"/><path d="M14 15 27 10.500l4 13.500-13 4.500z" fill="#f4f3ee"/><path d="M27 10.500 38 12.500l-3 12-4-1z" fill="#fbfbf7"/><path d="M17.500 17.500l8-2.800M18.500 20.500l8-2.800M19.500 23.500l8-2.800" stroke="#c2c0b8" stroke-width=".8"/><path d="M32 19 39.500 8.500l3 2L35 21l-3.500 1z" fill="#f2a33a"/><path d="M39.500 8.500 41.500 5.800l3 2-2 2.700z" fill="#ee6a5a"/><path d="M49.500 13c0-11 20-11 20 0v14c0 4-20 4-20 0z" fill="#1a86ee"/><path d="M55 5.500c0-6 9-6 9 0" fill="none" stroke="#1668c8" stroke-width="2.300"/><path d="M52 18c0-3 15-3 15 0v8c0 3-15 3-15 0z" fill="#3aa0ff"/><path d="M52.500 26c4 2.500 10 2.500 14 0" stroke="#c58af5" stroke-width="1.600" fill="none"/><path d="M51.500 20.500v4" stroke="#fff" stroke-width="1.200"/></svg>
<svg style="left:351px;top:1051px" width="18" height="18" viewBox="0 0 18 18"><circle cx="9" cy="9" r="6.700" fill="none" stroke="#fff" stroke-width="2"/></svg>
<svg style="left:399px;top:1052px" width="18" height="16" viewBox="0 0 18 16"><path d="M1.600 3V.600H12.400V3M1.600 13v2.400H12.400V13" fill="none" stroke="#fff" stroke-width="1.200"/><rect x="1.600" y="4.600" width="10.800" height="6.800" fill="none" stroke="#fff" stroke-width="1.200"/><rect x="14" y="4" width="3" height="3" fill="#fff"/><path d="M15.500 0v2M15.500 9v7" stroke="#fff" stroke-width="1.200"/></svg>
<!-- app icons -->
<svg style="left:447px;top:1048px" width="25" height="25" viewBox="0 0 25 25"><rect x=".5" y=".5" width="24" height="24" rx="4" fill="#f0772a"/><g fill="#fff"><circle cx="8" cy="8.300" r="4.700"/><circle cx="17" cy="8.300" r="4.700"/><circle cx="8" cy="16.700" r="4.700"/><circle cx="17" cy="16.700" r="4.700"/><rect x="7" y="8" width="11" height="9"/></g><g fill="#f0772a"><circle cx="8" cy="8.300" r="2"/><circle cx="17" cy="8.300" r="2"/><circle cx="8" cy="16.700" r="2"/><circle cx="17" cy="16.700" r="2"/><path d="M8 11.200h9v2.600H8z"/><circle cx="2.800" cy="12.500" r="1.600"/><circle cx="22.200" cy="12.500" r="1.600"/></g></svg>
<svg style="left:495px;top:1049px" width="25" height="22" viewBox="0 0 25 22"><path d="M1 2.500h8l2 2.500h13v15H1z" fill="#f6c445"/><path d="M1 7h23v13H1z" fill="#fbd96b"/><path d="M5 13h15v7H5z" fill="#3d8fdc"/><path d="M8.500 16h8v4h-8z" fill="#fbd96b"/></svg>
<svg style="left:544px;top:1047px" width="26" height="26" viewBox="0 0 26 26"><circle cx="13" cy="13" r="12.500" fill="#fff"/><path d="M13 .5A12.500 12.500 0 0 1 23.800 6.800H13a6.200 6.200 0 0 0-5.900 4.300L2.600 5.300A12.500 12.500 0 0 1 13 .5z" fill="#e33b2e"/><path d="M23.800 6.800A12.500 12.500 0 0 1 12.200 25.500l5.900-9.500a6.200 6.200 0 0 0 .1-6.400z" fill="#fbc116"/><path d="M12.200 25.500A12.500 12.500 0 0 1 2.600 5.300l5 8.700a6.200 6.200 0 0 0 8.400 4.400z" fill="#2ba24c"/><circle cx="13" cy="13" r="5.700" fill="#fff"/><circle cx="13" cy="13" r="4.600" fill="#3c7de6"/></svg>
<svg style="left:593px;top:1047px" width="26" height="26" viewBox="0 0 26 26"><path d="M18.500 1 25 4v18l-6.500 3L6 13.800 2.500 16.500.5 15.200V10.800L2.500 9.500 6 12.200z" fill="#2a9cf0"/><path d="M18.500 1 25 4v18l-6.500 3z" fill="#1276c9"/><path d="M18.500 7.500 10.500 13l8 5.500z" fill="#1d1d1d"/><path d="M.5 10.800 2.500 9.500 18.500 25l-3-1z" fill="#0e62ad" fill-opacity=".7"/></svg>
<svg style="left:642px;top:1047px" width="30" height="28" viewBox="0 0 30 28"><circle cx="13" cy="13" r="12.500" fill="#fff"/><path d="M13 .5A12.500 12.500 0 0 1 23.800 6.800H13a6.200 6.200 0 0 0-5.900 4.300L2.600 5.300A12.500 12.500 0 0 1 13 .5z" fill="#e33b2e"/><path d="M23.800 6.800A12.500 12.500 0 0 1 12.200 25.500l5.900-9.500a6.200 6.200 0 0 0 .1-6.400z" fill="#fbc116"/><path d="M12.200 25.500A12.500 12.500 0 0 1 2.600 5.300l5 8.700a6.200 6.200 0 0 0 8.400 4.400z" fill="#2ba24c"/><circle cx="13" cy="13" r="5.700" fill="#fff"/><circle cx="13" cy="13" r="4.600" fill="#3c7de6"/><circle cx="21" cy="20" r="7" fill="#1c1c1c"/><ellipse cx="20.500" cy="21" rx="4" ry="4.500" fill="#f1c9a8"/><path d="M15 19c0-6 12-6 12 0l-1.500 1.500C24 17 18 17 16.500 20.500z" fill="#111"/></svg>
<svg style="left:691px;top:1047px" width="26" height="27" viewBox="0 0 26 27"><path d="M13 .5 24.500 7v13L13 26.500 1.500 20V7z" fill="#c9c9c9"/><path d="M13 .5 24.500 7 13 13.500 1.500 7z" fill="#e9e9e9"/><path d="M13 13.500V26.500L1.500 20V7z" fill="#b4b4b4"/><path d="M13 6.500 19 10v7l-6 3.500L7 17v-7z" fill="#f4f4f4" stroke="#444" stroke-width="1.200"/><path d="M7 10l6 3.500 6-3.500M13 13.500v7" stroke="#444" stroke-width="1.200" fill="none"/></svg>
<div class="a" style="left:729px;top:1040px;width:47px;height:40px;background:#3d3d3d"></div>
<svg style="left:740px;top:1047px" width="26" height="27" viewBox="0 0 26 27"><path d="M13 .5 24.500 7v13L13 26.500 1.500 20V7z" fill="#2d2d2d"/><path d="M13 .5 24.500 7 13 13.500 1.500 7z" fill="#6a6a6a"/><path d="M13 13.500V26.500L1.500 20V7z" fill="#4a4a4a"/><path d="M13 6.500 19 10v7l-6 3.500L7 17v-7z" fill="#f4f4f4" stroke="#222" stroke-width="1.200"/><path d="M7 10l6 3.500 6-3.500M13 13.500v7" stroke="#222" stroke-width="1.200" fill="none"/></svg>
<svg style="left:790px;top:1048px" width="24" height="23" viewBox="0 0 24 23"><rect x=".8" y=".8" width="22.400" height="21.400" fill="#0a1a5c" stroke="#7fb2f5" stroke-width="1.600"/><text x="4" y="16.500" font-family="Liberation Sans" font-weight="bold" font-size="12.500" fill="#8ec1ff">Ps</text></svg>
<svg style="left:838px;top:1047px" width="26" height="26" viewBox="0 0 26 26"><path d="M18.500 1 25 3.500v19L18.500 25 6.500 14.500 3 17.500 1 16.500v-7L3 8.500l3.500 3z" fill="#8b5fd0"/><path d="M18.500 1 25 3.500v19L18.500 25z" fill="#6a3fb0"/><path d="M18.500 8 11.500 13l7 5z" fill="#1d1d1d"/><path d="M3 8.500v9" stroke="#c9a9f5" stroke-width="1.500"/></svg>
<svg style="left:888px;top:1048px" width="24" height="24" viewBox="0 0 24 24"><rect x=".5" y=".5" width="23" height="23" rx="3" fill="#1f7fe0"/><path d="M.5 20 9 9.500l6 7 3-3.500 5.500 6.500v1A3 3 0 0 1 20.500 23.500H3.500A3 3 0 0 1 .5 20.500z" fill="#39c0f5"/><path d="M.5 21 9 12l9 11.500H3.500A3 3 0 0 1 .5 20.500z" fill="#2aa3ea"/><circle cx="17" cy="6" r="2" fill="#fff"/></svg>
<div class="a" style="left:488px;top:1078px;width:39px;height:2px;background:#76b9ed"></div>
<div class="a" style="left:636px;top:1078px;width:39px;height:2px;background:#76b9ed"></div>
<div class="a" style="left:684px;top:1078px;width:39px;height:2px;background:#76b9ed"></div>
<div class="a" style="left:729px;top:1078px;width:47px;height:2px;background:#76b9ed"></div>
<div class="a" style="left:782px;top:1078px;width:40px;height:2px;background:#76b9ed"></div>
<div class="a" style="left:831px;top:1078px;width:40px;height:2px;background:#76b9ed"></div>
<div class="a" style="left:880px;top:1078px;width:40px;height:2px;background:#76b9ed"></div>
<!-- tray -->
<svg style="left:1534px;top:1049px" width="22" height="22" viewBox="0 0 22 22"><defs><radialGradient id="gsun" cx=".4" cy=".35" r=".8"><stop offset="0" stop-color="#fbb034"/><stop offset="1" stop-color="#f0640c"/></radialGradient></defs><circle cx="11" cy="11" r="10.300" fill="url(#gsun)"/></svg>
<div class="t" style="left:1565px;top:1053px;font-size:14.500px;color:#f0f0f0;letter-spacing:-.4px">20°C</div>
<div class="t" style="left:1603px;top:1053px;font-size:14.500px;color:#f0f0f0;letter-spacing:-.3px">Soleado</div>
<svg style="left:1676px;top:1055px" width="14" height="9" viewBox="0 0 14 9"><path d="M1 8 7 1.500 13 8" fill="none" stroke="#fff" stroke-width="1.500"/></svg>
<svg style="left:1698px;top:1053px" width="19" height="13" viewBox="0 0 19 13"><rect x="4" y="3" width="12.500" height="8" fill="none" stroke="#fff" stroke-width="1.200"/><rect x="17" y="5.500" width="1.500" height="3" fill="#fff"/><rect x="5.500" y="4.500" width="8" height="5" fill="#fff"/><path d="M2.500 0v3M5 0v3M1 3h5.500v2.500a2.700 2.700 0 0 1-5.500 0zM3.700 8v3" stroke="#fff" stroke-width="1.100" fill="#1d1d1d"/></svg>
<svg style="left:1724px;top:1052px" width="16" height="16" viewBox="0 0 16 16"><path d="M2 14A12 12 0 0 1 14 2" fill="none" stroke="#fff" stroke-width="1.300"/><path d="M5.500 14A8.500 8.500 0 0 1 14 5.500" fill="none" stroke="#fff" stroke-width="1.300"/><path d="M9 14a5 5 0 0 1 5-5" fill="none" stroke="#fff" stroke-width="1.300"/><circle cx="13" cy="13" r="1.400" fill="#fff"/></svg>
<svg style="left:1746px;top:1052px" width="18" height="16" viewBox="0 0 18 16"><path d="M1 5.500h3L8 2v12L4 10.500H1z" fill="none" stroke="#fff" stroke-width="1.200"/><path d="M10.500 5.500a3.500 3.500 0 0 1 0 5" fill="none" stroke="#fff" stroke-width="1.100"/><path d="M12.500 3.500a6.200 6.200 0 0 1 0 9" fill="none" stroke="#aaa" stroke-width="1"/><path d="M14.500 1.500a9 9 0 0 1 0 13" fill="none" stroke="#777" stroke-width="1"/></svg>
<div class="t" style="left:1774px;top:1054px;font-size:13px;color:#fff;letter-spacing:-.6px">CAT</div>
<div class="t" style="left:1821px;top:1044px;font-size:13px;color:#fff;letter-spacing:-.5px">16:28</div>
<div class="t" style="left:1808px;top:1062px;font-size:13px;color:#fff;letter-spacing:-.5px">20/2/2024</div>
<svg style="left:1879px;top:1052px" width="17" height="17" viewBox="0 0 17 17"><path d="M.5.500h16v12H11l-2.500 3.500L6 12.500H.5z" fill="#fff"/><path d="M3.500 4h10M3.500 6.500h10M3.500 9h7" stroke="#1d1d1d" stroke-width="1"/></svg>
<!-- annotation arrows -->
<svg style="left:0;top:0" width="1920" height="1080" viewBox="0 0 1920 1080">
<path d="M910.8 353.7L961.7 220.6M1328.9 236.3L1529.5 130.9M1164.0 543.0L1512.5 329.2M1676.8 114.3L1684.9 159.4M1863.6 99.3L1859.1 158.2M1514.3 237.0L1650.1 219.1M1706.9 335.4L1703.6 261.6M1775.1 311.0L1775.6 266.7M1831.9 326.6L1848.4 263.8" stroke="#fff" stroke-width="1.900" fill="none"/>
<path d="M967.8 204.7L966.1 224.4L956.0 220.5zM1544.6 123.0L1530.3 136.6L1525.3 127.1zM1527.0 320.3L1513.6 334.8L1508.0 325.6zM1687.9 176.1L1679.2 158.4L1689.9 156.4zM1857.8 175.2L1853.9 155.8L1864.6 156.7zM1667.0 216.9L1648.9 224.7L1647.5 214.0zM1702.9 244.6L1709.1 263.3L1698.3 263.8zM1775.8 249.7L1781.0 268.8L1770.2 268.6zM1852.7 247.4L1853.1 267.1L1842.7 264.4z" fill="#fff"/>
</svg>
</div>
</body></html>
